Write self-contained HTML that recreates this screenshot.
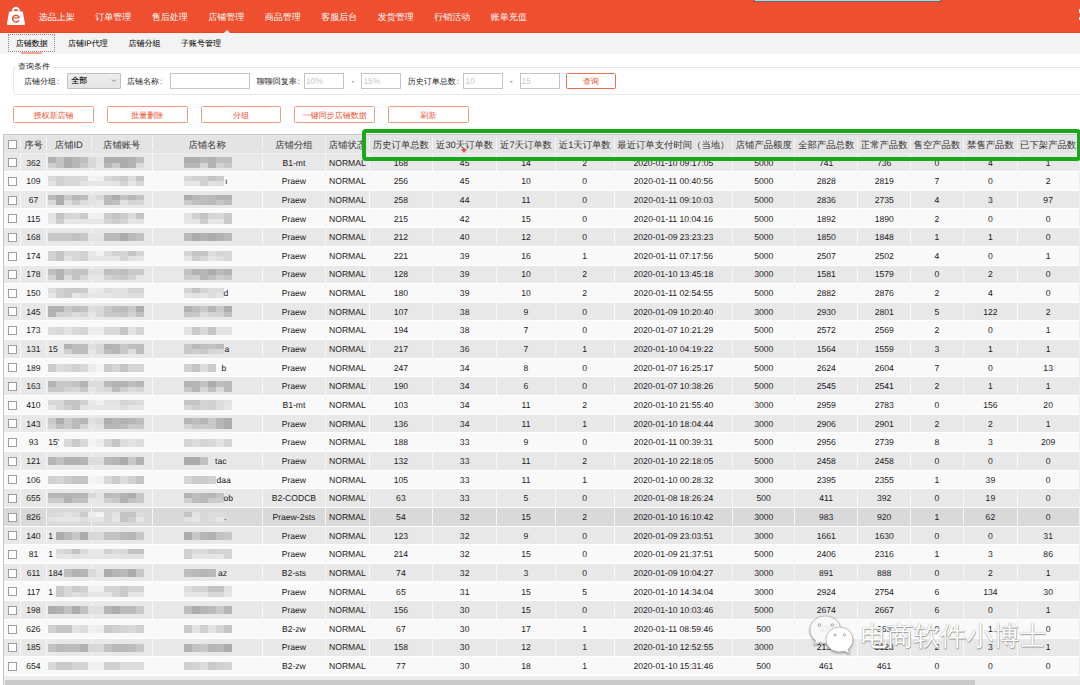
<!DOCTYPE html><html><head><meta charset="utf-8"><style>
*{margin:0;padding:0;box-sizing:border-box}
html,body{width:1080px;height:685px;overflow:hidden;background:#fff;text-rendering:geometricPrecision;font-family:"Liberation Sans",sans-serif;color:#333;position:relative}
.a{position:absolute;white-space:nowrap}
.nav{color:#fff;font-size:9px;top:11px;line-height:12px}
.tab{font-size:8px;top:39px;line-height:10px;color:#000;-webkit-text-stroke:0.05px #000}
.lbl{font-size:8px;line-height:10px;top:76.5px;color:#1a1a1a}
.inp{border:1px solid #c4c4c4;background:#fff;height:16px;top:73px;font-size:8.5px;color:#c8c8c8;line-height:15px;padding-left:1px}
.btn{border:1px solid #f19a86;border-radius:1.5px;height:16.7px;top:106.1px;width:80.5px;text-align:center;color:#eb4f2f;font-size:8px;line-height:17px}
.hd{font-size:9.35px;line-height:12px;color:#333;text-align:center;overflow:hidden}
.td{font-size:8.6px;line-height:12px;color:#222;text-align:center}
.cb{width:9px;height:9px;border:1px solid #9c9c9c;background:#fff}
</style></head><body>

<div class="a" style="left:0;top:0;width:1080px;height:33px;background:#EE4F2E;box-shadow:inset 0 -1px #ec4421"></div>
<div class="a" style="left:754.3px;top:0;width:186.7px;height:1.8px;background:#c9cdd1;border:0.6px solid #5d6a75;border-top:none"></div>
<div class="a" style="left:1078.8px;top:8.9px;width:2px;height:4.4px;background:#fff"></div><div class="a" style="left:1078.5px;top:17px;width:2px;height:3px;background:#fff"></div>
<svg class="a" style="left:0;top:0" width="40" height="33" viewBox="0 0 40 33">
<path d="M11.9 11.4 C11.9 8.3 13.6 6.8 15.9 6.8 C18.2 6.8 19.9 8.3 19.9 11.4 L22 11.4 Q22.7 11.5 22.9 12.3 L25 23.6 Q25.2 25 24 25 L8 25 Q6.8 25 7 23.6 L9 12.3 Q9.2 11.5 9.9 11.4 Z M14 10.9 L17.9 10.9 C17.9 9.5 17.1 8.9 15.9 8.9 C14.8 8.9 14 9.5 14 10.9 Z" fill="#fff" fill-rule="evenodd"/>
<path d="M18.9 20.3 A3.4 3.4 0 1 1 19.3 18" fill="none" stroke="#EE4F2E" stroke-width="1.4"/>
<path d="M12.8 17.9 L19.3 17.9" stroke="#EE4F2E" stroke-width="1.1"/>
</svg>
<div class="a nav" style="left:38.8px">选品上架</div>
<div class="a nav" style="left:95.3px">订单管理</div>
<div class="a nav" style="left:151.8px">售后处理</div>
<div class="a nav" style="left:208.3px">店铺管理</div>
<div class="a nav" style="left:264.8px">商品管理</div>
<div class="a nav" style="left:321.3px">客服后台</div>
<div class="a nav" style="left:377.8px">发货管理</div>
<div class="a nav" style="left:434.3px">行销活动</div>
<div class="a nav" style="left:490.8px">账单充值</div>
<div class="a" style="left:223.6px;top:29.5px;width:0;height:0;border-left:3.8px solid transparent;border-right:3.8px solid transparent;border-bottom:3.6px solid #fafafa"></div>
<div class="a" style="left:0;top:33px;width:1080px;height:20.5px;background:#f3f3f3"></div>
<div class="a" style="left:8px;top:34.2px;width:47px;height:17.4px;border:1px dotted #8a8a8a"></div>
<div class="a" style="left:20.8px;top:52.4px;width:21.4px;height:1.2px;background:#f7a592"></div>
<div class="a tab" style="left:15.7px">店铺数据</div>
<div class="a tab" style="left:68.1px">店铺IP代理</div>
<div class="a tab" style="left:128.4px">店铺分组</div>
<div class="a tab" style="left:181px">子账号管理</div>
<div class="a" style="left:13px;top:66.5px;width:1100px;height:28.2px;border:1px solid #e3e9ef;border-radius:3px"></div>
<div class="a" style="left:16px;top:61px;width:37px;height:10px;background:#fff"></div>
<div class="a tab" style="left:18px;top:61.5px;color:#222;-webkit-text-stroke:0">查询条件</div>
<div class="a lbl" style="left:24px">店铺分组<span style="margin-left:1px">:</span></div>
<div class="a" style="left:67px;top:73.3px;width:53.5px;height:15.5px;background:linear-gradient(#eeeeee,#e4e4e4);border:1px solid #c0c0c0;border-radius:1px"></div>
<div class="a" style="left:71.3px;top:76px;font-size:8px;line-height:10px;color:#000;-webkit-text-stroke:0.1px #000">全部</div>
<svg class="a" style="left:111px;top:79px" width="6" height="4"><path d="M1 0.6 L3 2.6 L5 0.6" stroke="#666" stroke-width="0.8" fill="none"/></svg>
<div class="a lbl" style="left:127px">店铺名称<span style="margin-left:1px">:</span></div>
<div class="a inp" style="left:170.1px;width:79.7px"></div>
<div class="a lbl" style="left:256.8px">聊聊回复率<span style="margin-left:1px">:</span></div>
<div class="a inp" style="left:304px;width:39.7px">10%</div>
<div class="a lbl" style="left:351.5px">-</div>
<div class="a inp" style="left:361.2px;width:39.5px">15%</div>
<div class="a lbl" style="left:407.8px">历史订单总数<span style="margin-left:1px">:</span></div>
<div class="a inp" style="left:463.3px;width:39.4px">10</div>
<div class="a lbl" style="left:510px">-</div>
<div class="a inp" style="left:519.6px;width:40px">15</div>
<div class="a btn" style="left:566.2px;top:73.3px;width:49.4px;height:16px;line-height:16.5px;color:#e8472a;border-color:#ef6c50">查询</div>
<div class="a btn" style="left:13.30px">授权新店铺</div>
<div class="a btn" style="left:107.02px">批量删除</div>
<div class="a btn" style="left:200.74px">分组</div>
<div class="a btn" style="left:294.46px">一键同步店铺数据</div>
<div class="a btn" style="left:388.18px">刷新</div>
<div class="a" style="left:3.3px;top:134.3px;width:1080px;height:550.7px;background:#eeeeee;border-left:1px solid #c5c8cc;border-top:1px solid #c8c8c8"></div>
<div class="a" style="left:4px;top:135.0px;width:1075px;height:18.3px;background:#e4e4e4"></div>
<div class="a" style="left:20.2px;top:137.3px;width:1px;height:13.0px;background:#f4f4f4"></div>
<div class="a" style="left:45.8px;top:137.3px;width:1px;height:13.0px;background:#f4f4f4"></div>
<div class="a" style="left:90.8px;top:137.3px;width:1px;height:13.0px;background:#f4f4f4"></div>
<div class="a" style="left:151.7px;top:137.3px;width:1px;height:13.0px;background:#f4f4f4"></div>
<div class="a" style="left:261.5px;top:137.3px;width:1px;height:13.0px;background:#f4f4f4"></div>
<div class="a" style="left:325.3px;top:137.3px;width:1px;height:13.0px;background:#f4f4f4"></div>
<div class="a" style="left:368.5px;top:137.3px;width:1px;height:13.0px;background:#f4f4f4"></div>
<div class="a" style="left:432.3px;top:137.3px;width:1px;height:13.0px;background:#f4f4f4"></div>
<div class="a" style="left:496.0px;top:137.3px;width:1px;height:13.0px;background:#f4f4f4"></div>
<div class="a" style="left:555.0px;top:137.3px;width:1px;height:13.0px;background:#f4f4f4"></div>
<div class="a" style="left:613.5px;top:137.3px;width:1px;height:13.0px;background:#f4f4f4"></div>
<div class="a" style="left:732.3px;top:137.3px;width:1px;height:13.0px;background:#f4f4f4"></div>
<div class="a" style="left:794.1px;top:137.3px;width:1px;height:13.0px;background:#f4f4f4"></div>
<div class="a" style="left:857.3px;top:137.3px;width:1px;height:13.0px;background:#f4f4f4"></div>
<div class="a" style="left:910.1px;top:137.3px;width:1px;height:13.0px;background:#f4f4f4"></div>
<div class="a" style="left:962.8px;top:137.3px;width:1px;height:13.0px;background:#f4f4f4"></div>
<div class="a" style="left:1017.0px;top:137.3px;width:1px;height:13.0px;background:#f4f4f4"></div>
<div class="a cb" style="left:8.2px;top:140px"></div>
<div class="a hd" style="left:20.7px;top:138.8px;width:25.6px">序号</div>
<div class="a hd" style="left:46.3px;top:138.8px;width:45.0px">店铺ID</div>
<div class="a hd" style="left:91.3px;top:138.8px;width:60.9px">店铺账号</div>
<div class="a hd" style="left:152.2px;top:138.8px;width:109.8px">店铺名称</div>
<div class="a hd" style="left:262.0px;top:138.8px;width:63.8px">店铺分组</div>
<div class="a hd" style="left:325.8px;top:138.8px;width:43.2px">店铺状态</div>
<div class="a hd" style="left:369.0px;top:138.8px;width:63.8px">历史订单总数</div>
<div class="a hd" style="left:432.8px;top:138.8px;width:63.7px">近30天订单数</div>
<div class="a hd" style="left:496.5px;top:138.8px;width:59.0px">近7天订单数</div>
<div class="a hd" style="left:555.5px;top:138.8px;width:58.5px">近1天订单数</div>
<div class="a hd" style="left:614.0px;top:138.8px;width:118.8px">最近订单支付时间（当地）</div>
<div class="a hd" style="left:732.8px;top:138.8px;width:61.8px">店铺产品额度</div>
<div class="a hd" style="left:794.6px;top:138.8px;width:63.2px">全部产品总数</div>
<div class="a hd" style="left:857.8px;top:138.8px;width:52.8px">正常产品数</div>
<div class="a hd" style="left:910.6px;top:138.8px;width:52.7px">售空产品数</div>
<div class="a hd" style="left:963.3px;top:138.8px;width:54.2px">禁售产品数</div>
<div class="a hd" style="left:1017.5px;top:138.8px;width:61.3px">已下架产品数</div>
<div class="a" style="left:461px;top:148.6px;width:0;height:0;border-left:3px solid transparent;border-right:3px solid transparent;border-top:4px solid #ee4f2e"></div>
<div class="a" style="left:4px;top:153.70px;width:1074.8px;height:17.45px;background:#e8e8e8;"></div>
<div class="a" style="left:20.2px;top:153.30px;width:1px;height:18.65px;background:#f6f6f6"></div>
<div class="a" style="left:45.8px;top:153.30px;width:1px;height:18.65px;background:#f6f6f6"></div>
<div class="a" style="left:90.8px;top:153.30px;width:1px;height:18.65px;background:#f6f6f6"></div>
<div class="a" style="left:151.7px;top:153.30px;width:1px;height:18.65px;background:#f6f6f6"></div>
<div class="a" style="left:261.5px;top:153.30px;width:1px;height:18.65px;background:#f6f6f6"></div>
<div class="a" style="left:325.3px;top:153.30px;width:1px;height:18.65px;background:#f6f6f6"></div>
<div class="a" style="left:368.5px;top:153.30px;width:1px;height:18.65px;background:#f6f6f6"></div>
<div class="a" style="left:432.3px;top:153.30px;width:1px;height:18.65px;background:#f6f6f6"></div>
<div class="a" style="left:496.0px;top:153.30px;width:1px;height:18.65px;background:#f6f6f6"></div>
<div class="a" style="left:555.0px;top:153.30px;width:1px;height:18.65px;background:#f6f6f6"></div>
<div class="a" style="left:613.5px;top:153.30px;width:1px;height:18.65px;background:#f6f6f6"></div>
<div class="a" style="left:732.3px;top:153.30px;width:1px;height:18.65px;background:#f6f6f6"></div>
<div class="a" style="left:794.1px;top:153.30px;width:1px;height:18.65px;background:#f6f6f6"></div>
<div class="a" style="left:857.3px;top:153.30px;width:1px;height:18.65px;background:#f6f6f6"></div>
<div class="a" style="left:910.1px;top:153.30px;width:1px;height:18.65px;background:#f6f6f6"></div>
<div class="a" style="left:962.8px;top:153.30px;width:1px;height:18.65px;background:#f6f6f6"></div>
<div class="a" style="left:1017.0px;top:153.30px;width:1px;height:18.65px;background:#f6f6f6"></div>
<div class="a cb" style="left:8.2px;top:158.30px"></div>
<div class="a td" style="left:20.7px;top:156.60px;width:25.6px">362</div>
<div class="a td" style="left:262.0px;top:156.60px;width:63.8px">B1-mt</div>
<div class="a td" style="left:325.8px;top:156.60px;width:43.2px">NORMAL</div>
<div class="a td" style="left:369.0px;top:156.60px;width:63.8px">168</div>
<div class="a td" style="left:432.8px;top:156.60px;width:63.7px">45</div>
<div class="a td" style="left:496.5px;top:156.60px;width:59.0px">14</div>
<div class="a td" style="left:555.5px;top:156.60px;width:58.5px">2</div>
<div class="a td" style="left:614.0px;top:156.60px;width:118.8px">2020-01-10 09:17:05</div>
<div class="a td" style="left:732.8px;top:156.60px;width:61.8px">5000</div>
<div class="a td" style="left:794.6px;top:156.60px;width:63.2px">741</div>
<div class="a td" style="left:857.8px;top:156.60px;width:52.8px">736</div>
<div class="a td" style="left:910.6px;top:156.60px;width:52.7px">0</div>
<div class="a td" style="left:963.3px;top:156.60px;width:54.2px">4</div>
<div class="a td" style="left:1017.5px;top:156.60px;width:61.3px">1</div>
<div class="a" style="left:47.9px;top:157.30px;width:8px;height:5.5px;background:#b2b2b2"></div>
<div class="a" style="left:47.9px;top:162.80px;width:8px;height:5px;background:#d0d0d0"></div>
<div class="a" style="left:55.9px;top:157.30px;width:8px;height:5.5px;background:#c2c2c2"></div>
<div class="a" style="left:55.9px;top:162.80px;width:8px;height:5px;background:#c2c2c2"></div>
<div class="a" style="left:63.9px;top:157.30px;width:8px;height:5.5px;background:#acacac"></div>
<div class="a" style="left:63.9px;top:162.80px;width:8px;height:5px;background:#acacac"></div>
<div class="a" style="left:71.9px;top:157.30px;width:8px;height:5.5px;background:#b6b6b6"></div>
<div class="a" style="left:71.9px;top:162.80px;width:8px;height:5px;background:#b6b6b6"></div>
<div class="a" style="left:79.9px;top:157.30px;width:8px;height:5.5px;background:#bebebe"></div>
<div class="a" style="left:79.9px;top:162.80px;width:8px;height:5px;background:#c8c8c8"></div>
<div class="a" style="left:87.9px;top:157.30px;width:8px;height:5.5px;background:#d8d8d8"></div>
<div class="a" style="left:87.9px;top:162.80px;width:8px;height:5px;background:#d8d8d8"></div>
<div class="a" style="left:95.9px;top:157.30px;width:8px;height:5.5px;background:#e4e4e4"></div>
<div class="a" style="left:95.9px;top:162.80px;width:8px;height:5px;background:#e6e6e6"></div>
<div class="a" style="left:103.9px;top:157.30px;width:8px;height:5.5px;background:#acacac"></div>
<div class="a" style="left:103.9px;top:162.80px;width:8px;height:5px;background:#b6b6b6"></div>
<div class="a" style="left:111.9px;top:157.30px;width:8px;height:5.5px;background:#acacac"></div>
<div class="a" style="left:111.9px;top:162.80px;width:8px;height:5px;background:#cacaca"></div>
<div class="a" style="left:119.9px;top:157.30px;width:8px;height:5.5px;background:#acacac"></div>
<div class="a" style="left:119.9px;top:162.80px;width:8px;height:5px;background:#acacac"></div>
<div class="a" style="left:127.9px;top:157.30px;width:8px;height:5.5px;background:#b2b2b2"></div>
<div class="a" style="left:127.9px;top:162.80px;width:8px;height:5px;background:#b2b2b2"></div>
<div class="a" style="left:135.9px;top:157.30px;width:8px;height:5.5px;background:#bebebe"></div>
<div class="a" style="left:135.9px;top:162.80px;width:8px;height:5px;background:#dcdcdc"></div>
<div class="a" style="left:183.7px;top:157.30px;width:8px;height:5.5px;background:#acacac"></div>
<div class="a" style="left:183.7px;top:162.80px;width:8px;height:5px;background:#b6b6b6"></div>
<div class="a" style="left:191.7px;top:157.30px;width:8px;height:5.5px;background:#acacac"></div>
<div class="a" style="left:191.7px;top:162.80px;width:8px;height:5px;background:#b6b6b6"></div>
<div class="a" style="left:199.7px;top:157.30px;width:8px;height:5.5px;background:#b6b6b6"></div>
<div class="a" style="left:199.7px;top:162.80px;width:8px;height:5px;background:#d4d4d4"></div>
<div class="a" style="left:207.7px;top:157.30px;width:8px;height:5.5px;background:#b2b2b2"></div>
<div class="a" style="left:207.7px;top:162.80px;width:8px;height:5px;background:#b2b2b2"></div>
<div class="a" style="left:215.7px;top:157.30px;width:8px;height:5.5px;background:#bebebe"></div>
<div class="a" style="left:215.7px;top:162.80px;width:8px;height:5px;background:#d2d2d2"></div>
<div class="a" style="left:223.7px;top:157.30px;width:8px;height:5.5px;background:#bebebe"></div>
<div class="a" style="left:223.7px;top:162.80px;width:8px;height:5px;background:#c8c8c8"></div>
<div class="a" style="left:4px;top:171.15px;width:1074.8px;height:19.85px;background:#faf9f9;box-shadow:inset 0 1px #fff,inset 0 -1px #fff"></div>
<div class="a" style="left:20.2px;top:171.95px;width:1px;height:18.65px;background:#f6f6f6"></div>
<div class="a" style="left:45.8px;top:171.95px;width:1px;height:18.65px;background:#f6f6f6"></div>
<div class="a" style="left:90.8px;top:171.95px;width:1px;height:18.65px;background:#f6f6f6"></div>
<div class="a" style="left:151.7px;top:171.95px;width:1px;height:18.65px;background:#f6f6f6"></div>
<div class="a" style="left:261.5px;top:171.95px;width:1px;height:18.65px;background:#f6f6f6"></div>
<div class="a" style="left:325.3px;top:171.95px;width:1px;height:18.65px;background:#f6f6f6"></div>
<div class="a" style="left:368.5px;top:171.95px;width:1px;height:18.65px;background:#f6f6f6"></div>
<div class="a" style="left:432.3px;top:171.95px;width:1px;height:18.65px;background:#f6f6f6"></div>
<div class="a" style="left:496.0px;top:171.95px;width:1px;height:18.65px;background:#f6f6f6"></div>
<div class="a" style="left:555.0px;top:171.95px;width:1px;height:18.65px;background:#f6f6f6"></div>
<div class="a" style="left:613.5px;top:171.95px;width:1px;height:18.65px;background:#f6f6f6"></div>
<div class="a" style="left:732.3px;top:171.95px;width:1px;height:18.65px;background:#f6f6f6"></div>
<div class="a" style="left:794.1px;top:171.95px;width:1px;height:18.65px;background:#f6f6f6"></div>
<div class="a" style="left:857.3px;top:171.95px;width:1px;height:18.65px;background:#f6f6f6"></div>
<div class="a" style="left:910.1px;top:171.95px;width:1px;height:18.65px;background:#f6f6f6"></div>
<div class="a" style="left:962.8px;top:171.95px;width:1px;height:18.65px;background:#f6f6f6"></div>
<div class="a" style="left:1017.0px;top:171.95px;width:1px;height:18.65px;background:#f6f6f6"></div>
<div class="a cb" style="left:8.2px;top:176.95px"></div>
<div class="a td" style="left:20.7px;top:175.25px;width:25.6px">109</div>
<div class="a td" style="left:262.0px;top:175.25px;width:63.8px">Praew</div>
<div class="a td" style="left:325.8px;top:175.25px;width:43.2px">NORMAL</div>
<div class="a td" style="left:369.0px;top:175.25px;width:63.8px">256</div>
<div class="a td" style="left:432.8px;top:175.25px;width:63.7px">45</div>
<div class="a td" style="left:496.5px;top:175.25px;width:59.0px">10</div>
<div class="a td" style="left:555.5px;top:175.25px;width:58.5px">0</div>
<div class="a td" style="left:614.0px;top:175.25px;width:118.8px">2020-01-11 00:40:56</div>
<div class="a td" style="left:732.8px;top:175.25px;width:61.8px">5000</div>
<div class="a td" style="left:794.6px;top:175.25px;width:63.2px">2828</div>
<div class="a td" style="left:857.8px;top:175.25px;width:52.8px">2819</div>
<div class="a td" style="left:910.6px;top:175.25px;width:52.7px">7</div>
<div class="a td" style="left:963.3px;top:175.25px;width:54.2px">0</div>
<div class="a td" style="left:1017.5px;top:175.25px;width:61.3px">2</div>
<div class="a" style="left:47.9px;top:175.95px;width:8px;height:5.5px;background:#d8d8d8"></div>
<div class="a" style="left:47.9px;top:181.45px;width:8px;height:5px;background:#e2e2e2"></div>
<div class="a" style="left:55.9px;top:175.95px;width:8px;height:5.5px;background:#d0d0d0"></div>
<div class="a" style="left:55.9px;top:181.45px;width:8px;height:5px;background:#d0d0d0"></div>
<div class="a" style="left:63.9px;top:175.95px;width:8px;height:5.5px;background:#d8d8d8"></div>
<div class="a" style="left:63.9px;top:181.45px;width:8px;height:5px;background:#d8d8d8"></div>
<div class="a" style="left:71.9px;top:175.95px;width:8px;height:5.5px;background:#d8d8d8"></div>
<div class="a" style="left:71.9px;top:181.45px;width:8px;height:5px;background:#d8d8d8"></div>
<div class="a" style="left:79.9px;top:175.95px;width:8px;height:5.5px;background:#d8d8d8"></div>
<div class="a" style="left:79.9px;top:181.45px;width:8px;height:5px;background:#e2e2e2"></div>
<div class="a" style="left:87.9px;top:175.95px;width:8px;height:5.5px;background:#f4f4f4"></div>
<div class="a" style="left:87.9px;top:181.45px;width:8px;height:5px;background:#e6e6e6"></div>
<div class="a" style="left:95.9px;top:175.95px;width:8px;height:5.5px;background:#f0f0f0"></div>
<div class="a" style="left:95.9px;top:181.45px;width:8px;height:5px;background:#e6e6e6"></div>
<div class="a" style="left:103.9px;top:175.95px;width:8px;height:5.5px;background:#d8d8d8"></div>
<div class="a" style="left:103.9px;top:181.45px;width:8px;height:5px;background:#e6e6e6"></div>
<div class="a" style="left:111.9px;top:175.95px;width:8px;height:5.5px;background:#d0d0d0"></div>
<div class="a" style="left:111.9px;top:181.45px;width:8px;height:5px;background:#e4e4e4"></div>
<div class="a" style="left:119.9px;top:175.95px;width:8px;height:5.5px;background:#cacaca"></div>
<div class="a" style="left:119.9px;top:181.45px;width:8px;height:5px;background:#d4d4d4"></div>
<div class="a" style="left:127.9px;top:175.95px;width:8px;height:5.5px;background:#dcdcdc"></div>
<div class="a" style="left:127.9px;top:181.45px;width:8px;height:5px;background:#e6e6e6"></div>
<div class="a" style="left:135.9px;top:175.95px;width:8px;height:5.5px;background:#c4c4c4"></div>
<div class="a" style="left:135.9px;top:181.45px;width:8px;height:5px;background:#d8d8d8"></div>
<div class="a" style="left:183.7px;top:175.95px;width:8px;height:5.5px;background:#d8d8d8"></div>
<div class="a" style="left:183.7px;top:181.45px;width:8px;height:5px;background:#e6e6e6"></div>
<div class="a" style="left:191.7px;top:175.95px;width:8px;height:5.5px;background:#d0d0d0"></div>
<div class="a" style="left:191.7px;top:181.45px;width:8px;height:5px;background:#e6e6e6"></div>
<div class="a" style="left:199.7px;top:175.95px;width:8px;height:5.5px;background:#d0d0d0"></div>
<div class="a" style="left:199.7px;top:181.45px;width:8px;height:5px;background:#d0d0d0"></div>
<div class="a" style="left:207.7px;top:175.95px;width:8px;height:5.5px;background:#c4c4c4"></div>
<div class="a" style="left:207.7px;top:181.45px;width:8px;height:5px;background:#e2e2e2"></div>
<div class="a" style="left:215.7px;top:175.95px;width:8px;height:5.5px;background:#cacaca"></div>
<div class="a" style="left:215.7px;top:181.45px;width:8px;height:5px;background:#dedede"></div>
<div class="a" style="left:4px;top:191.00px;width:1074.8px;height:17.45px;background:#e8e8e8;"></div>
<div class="a" style="left:20.2px;top:190.60px;width:1px;height:18.65px;background:#f6f6f6"></div>
<div class="a" style="left:45.8px;top:190.60px;width:1px;height:18.65px;background:#f6f6f6"></div>
<div class="a" style="left:90.8px;top:190.60px;width:1px;height:18.65px;background:#f6f6f6"></div>
<div class="a" style="left:151.7px;top:190.60px;width:1px;height:18.65px;background:#f6f6f6"></div>
<div class="a" style="left:261.5px;top:190.60px;width:1px;height:18.65px;background:#f6f6f6"></div>
<div class="a" style="left:325.3px;top:190.60px;width:1px;height:18.65px;background:#f6f6f6"></div>
<div class="a" style="left:368.5px;top:190.60px;width:1px;height:18.65px;background:#f6f6f6"></div>
<div class="a" style="left:432.3px;top:190.60px;width:1px;height:18.65px;background:#f6f6f6"></div>
<div class="a" style="left:496.0px;top:190.60px;width:1px;height:18.65px;background:#f6f6f6"></div>
<div class="a" style="left:555.0px;top:190.60px;width:1px;height:18.65px;background:#f6f6f6"></div>
<div class="a" style="left:613.5px;top:190.60px;width:1px;height:18.65px;background:#f6f6f6"></div>
<div class="a" style="left:732.3px;top:190.60px;width:1px;height:18.65px;background:#f6f6f6"></div>
<div class="a" style="left:794.1px;top:190.60px;width:1px;height:18.65px;background:#f6f6f6"></div>
<div class="a" style="left:857.3px;top:190.60px;width:1px;height:18.65px;background:#f6f6f6"></div>
<div class="a" style="left:910.1px;top:190.60px;width:1px;height:18.65px;background:#f6f6f6"></div>
<div class="a" style="left:962.8px;top:190.60px;width:1px;height:18.65px;background:#f6f6f6"></div>
<div class="a" style="left:1017.0px;top:190.60px;width:1px;height:18.65px;background:#f6f6f6"></div>
<div class="a cb" style="left:8.2px;top:195.60px"></div>
<div class="a td" style="left:20.7px;top:193.90px;width:25.6px">67</div>
<div class="a td" style="left:262.0px;top:193.90px;width:63.8px">Praew</div>
<div class="a td" style="left:325.8px;top:193.90px;width:43.2px">NORMAL</div>
<div class="a td" style="left:369.0px;top:193.90px;width:63.8px">258</div>
<div class="a td" style="left:432.8px;top:193.90px;width:63.7px">44</div>
<div class="a td" style="left:496.5px;top:193.90px;width:59.0px">11</div>
<div class="a td" style="left:555.5px;top:193.90px;width:58.5px">0</div>
<div class="a td" style="left:614.0px;top:193.90px;width:118.8px">2020-01-11 09:10:03</div>
<div class="a td" style="left:732.8px;top:193.90px;width:61.8px">5000</div>
<div class="a td" style="left:794.6px;top:193.90px;width:63.2px">2836</div>
<div class="a td" style="left:857.8px;top:193.90px;width:52.8px">2735</div>
<div class="a td" style="left:910.6px;top:193.90px;width:52.7px">4</div>
<div class="a td" style="left:963.3px;top:193.90px;width:54.2px">3</div>
<div class="a td" style="left:1017.5px;top:193.90px;width:61.3px">97</div>
<div class="a" style="left:47.9px;top:194.60px;width:8px;height:5.5px;background:#bababa"></div>
<div class="a" style="left:47.9px;top:200.10px;width:8px;height:5px;background:#d8d8d8"></div>
<div class="a" style="left:55.9px;top:194.60px;width:8px;height:5.5px;background:#acacac"></div>
<div class="a" style="left:55.9px;top:200.10px;width:8px;height:5px;background:#acacac"></div>
<div class="a" style="left:63.9px;top:194.60px;width:8px;height:5.5px;background:#c8c8c8"></div>
<div class="a" style="left:63.9px;top:200.10px;width:8px;height:5px;background:#dcdcdc"></div>
<div class="a" style="left:71.9px;top:194.60px;width:8px;height:5.5px;background:#b6b6b6"></div>
<div class="a" style="left:71.9px;top:200.10px;width:8px;height:5px;background:#cacaca"></div>
<div class="a" style="left:79.9px;top:194.60px;width:8px;height:5.5px;background:#bebebe"></div>
<div class="a" style="left:79.9px;top:200.10px;width:8px;height:5px;background:#dcdcdc"></div>
<div class="a" style="left:87.9px;top:194.60px;width:8px;height:5.5px;background:#e4e4e4"></div>
<div class="a" style="left:87.9px;top:200.10px;width:8px;height:5px;background:#e4e4e4"></div>
<div class="a" style="left:95.9px;top:194.60px;width:8px;height:5.5px;background:#d8d8d8"></div>
<div class="a" style="left:95.9px;top:200.10px;width:8px;height:5px;background:#e6e6e6"></div>
<div class="a" style="left:103.9px;top:194.60px;width:8px;height:5.5px;background:#bababa"></div>
<div class="a" style="left:103.9px;top:200.10px;width:8px;height:5px;background:#bababa"></div>
<div class="a" style="left:111.9px;top:194.60px;width:8px;height:5.5px;background:#acacac"></div>
<div class="a" style="left:111.9px;top:200.10px;width:8px;height:5px;background:#c0c0c0"></div>
<div class="a" style="left:119.9px;top:194.60px;width:8px;height:5.5px;background:#c2c2c2"></div>
<div class="a" style="left:119.9px;top:200.10px;width:8px;height:5px;background:#e0e0e0"></div>
<div class="a" style="left:127.9px;top:194.60px;width:8px;height:5.5px;background:#b6b6b6"></div>
<div class="a" style="left:127.9px;top:200.10px;width:8px;height:5px;background:#d4d4d4"></div>
<div class="a" style="left:135.9px;top:194.60px;width:8px;height:5.5px;background:#c2c2c2"></div>
<div class="a" style="left:135.9px;top:200.10px;width:8px;height:5px;background:#d6d6d6"></div>
<div class="a" style="left:183.7px;top:194.60px;width:8px;height:5.5px;background:#acacac"></div>
<div class="a" style="left:183.7px;top:200.10px;width:8px;height:5px;background:#cacaca"></div>
<div class="a" style="left:191.7px;top:194.60px;width:8px;height:5.5px;background:#b6b6b6"></div>
<div class="a" style="left:191.7px;top:200.10px;width:8px;height:5px;background:#c0c0c0"></div>
<div class="a" style="left:199.7px;top:194.60px;width:8px;height:5.5px;background:#bebebe"></div>
<div class="a" style="left:199.7px;top:200.10px;width:8px;height:5px;background:#bebebe"></div>
<div class="a" style="left:207.7px;top:194.60px;width:8px;height:5.5px;background:#bababa"></div>
<div class="a" style="left:207.7px;top:200.10px;width:8px;height:5px;background:#bababa"></div>
<div class="a" style="left:215.7px;top:194.60px;width:8px;height:5.5px;background:#b2b2b2"></div>
<div class="a" style="left:215.7px;top:200.10px;width:8px;height:5px;background:#c6c6c6"></div>
<div class="a" style="left:223.7px;top:194.60px;width:8px;height:5.5px;background:#b2b2b2"></div>
<div class="a" style="left:223.7px;top:200.10px;width:8px;height:5px;background:#bcbcbc"></div>
<div class="a" style="left:4px;top:208.44px;width:1074.8px;height:19.85px;background:#faf9f9;box-shadow:inset 0 1px #fff,inset 0 -1px #fff"></div>
<div class="a" style="left:20.2px;top:209.24px;width:1px;height:18.65px;background:#f6f6f6"></div>
<div class="a" style="left:45.8px;top:209.24px;width:1px;height:18.65px;background:#f6f6f6"></div>
<div class="a" style="left:90.8px;top:209.24px;width:1px;height:18.65px;background:#f6f6f6"></div>
<div class="a" style="left:151.7px;top:209.24px;width:1px;height:18.65px;background:#f6f6f6"></div>
<div class="a" style="left:261.5px;top:209.24px;width:1px;height:18.65px;background:#f6f6f6"></div>
<div class="a" style="left:325.3px;top:209.24px;width:1px;height:18.65px;background:#f6f6f6"></div>
<div class="a" style="left:368.5px;top:209.24px;width:1px;height:18.65px;background:#f6f6f6"></div>
<div class="a" style="left:432.3px;top:209.24px;width:1px;height:18.65px;background:#f6f6f6"></div>
<div class="a" style="left:496.0px;top:209.24px;width:1px;height:18.65px;background:#f6f6f6"></div>
<div class="a" style="left:555.0px;top:209.24px;width:1px;height:18.65px;background:#f6f6f6"></div>
<div class="a" style="left:613.5px;top:209.24px;width:1px;height:18.65px;background:#f6f6f6"></div>
<div class="a" style="left:732.3px;top:209.24px;width:1px;height:18.65px;background:#f6f6f6"></div>
<div class="a" style="left:794.1px;top:209.24px;width:1px;height:18.65px;background:#f6f6f6"></div>
<div class="a" style="left:857.3px;top:209.24px;width:1px;height:18.65px;background:#f6f6f6"></div>
<div class="a" style="left:910.1px;top:209.24px;width:1px;height:18.65px;background:#f6f6f6"></div>
<div class="a" style="left:962.8px;top:209.24px;width:1px;height:18.65px;background:#f6f6f6"></div>
<div class="a" style="left:1017.0px;top:209.24px;width:1px;height:18.65px;background:#f6f6f6"></div>
<div class="a cb" style="left:8.2px;top:214.24px"></div>
<div class="a td" style="left:20.7px;top:212.54px;width:25.6px">115</div>
<div class="a td" style="left:262.0px;top:212.54px;width:63.8px">Praew</div>
<div class="a td" style="left:325.8px;top:212.54px;width:43.2px">NORMAL</div>
<div class="a td" style="left:369.0px;top:212.54px;width:63.8px">215</div>
<div class="a td" style="left:432.8px;top:212.54px;width:63.7px">42</div>
<div class="a td" style="left:496.5px;top:212.54px;width:59.0px">15</div>
<div class="a td" style="left:555.5px;top:212.54px;width:58.5px">0</div>
<div class="a td" style="left:614.0px;top:212.54px;width:118.8px">2020-01-11 10:04:16</div>
<div class="a td" style="left:732.8px;top:212.54px;width:61.8px">5000</div>
<div class="a td" style="left:794.6px;top:212.54px;width:63.2px">1892</div>
<div class="a td" style="left:857.8px;top:212.54px;width:52.8px">1890</div>
<div class="a td" style="left:910.6px;top:212.54px;width:52.7px">2</div>
<div class="a td" style="left:963.3px;top:212.54px;width:54.2px">0</div>
<div class="a td" style="left:1017.5px;top:212.54px;width:61.3px">0</div>
<div class="a" style="left:47.9px;top:213.24px;width:8px;height:5.5px;background:#e2e2e2"></div>
<div class="a" style="left:47.9px;top:218.74px;width:8px;height:5px;background:#e6e6e6"></div>
<div class="a" style="left:55.9px;top:213.24px;width:8px;height:5.5px;background:#c4c4c4"></div>
<div class="a" style="left:55.9px;top:218.74px;width:8px;height:5px;background:#cecece"></div>
<div class="a" style="left:63.9px;top:213.24px;width:8px;height:5.5px;background:#d4d4d4"></div>
<div class="a" style="left:63.9px;top:218.74px;width:8px;height:5px;background:#e6e6e6"></div>
<div class="a" style="left:71.9px;top:213.24px;width:8px;height:5.5px;background:#d8d8d8"></div>
<div class="a" style="left:71.9px;top:218.74px;width:8px;height:5px;background:#e6e6e6"></div>
<div class="a" style="left:79.9px;top:213.24px;width:8px;height:5.5px;background:#cacaca"></div>
<div class="a" style="left:79.9px;top:218.74px;width:8px;height:5px;background:#e6e6e6"></div>
<div class="a" style="left:87.9px;top:213.24px;width:8px;height:5.5px;background:#f0f0f0"></div>
<div class="a" style="left:87.9px;top:218.74px;width:8px;height:5px;background:#e6e6e6"></div>
<div class="a" style="left:95.9px;top:213.24px;width:8px;height:5.5px;background:#f0f0f0"></div>
<div class="a" style="left:95.9px;top:218.74px;width:8px;height:5px;background:#e6e6e6"></div>
<div class="a" style="left:103.9px;top:213.24px;width:8px;height:5.5px;background:#cacaca"></div>
<div class="a" style="left:103.9px;top:218.74px;width:8px;height:5px;background:#d4d4d4"></div>
<div class="a" style="left:111.9px;top:213.24px;width:8px;height:5.5px;background:#c4c4c4"></div>
<div class="a" style="left:111.9px;top:218.74px;width:8px;height:5px;background:#cecece"></div>
<div class="a" style="left:119.9px;top:213.24px;width:8px;height:5.5px;background:#cacaca"></div>
<div class="a" style="left:119.9px;top:218.74px;width:8px;height:5px;background:#d4d4d4"></div>
<div class="a" style="left:127.9px;top:213.24px;width:8px;height:5.5px;background:#dcdcdc"></div>
<div class="a" style="left:127.9px;top:218.74px;width:8px;height:5px;background:#e6e6e6"></div>
<div class="a" style="left:135.9px;top:213.24px;width:8px;height:5.5px;background:#c4c4c4"></div>
<div class="a" style="left:135.9px;top:218.74px;width:8px;height:5px;background:#e2e2e2"></div>
<div class="a" style="left:183.7px;top:213.24px;width:8px;height:5.5px;background:#e2e2e2"></div>
<div class="a" style="left:183.7px;top:218.74px;width:8px;height:5px;background:#e6e6e6"></div>
<div class="a" style="left:191.7px;top:213.24px;width:8px;height:5.5px;background:#d0d0d0"></div>
<div class="a" style="left:191.7px;top:218.74px;width:8px;height:5px;background:#e4e4e4"></div>
<div class="a" style="left:199.7px;top:213.24px;width:8px;height:5.5px;background:#c4c4c4"></div>
<div class="a" style="left:199.7px;top:218.74px;width:8px;height:5px;background:#cecece"></div>
<div class="a" style="left:207.7px;top:213.24px;width:8px;height:5.5px;background:#d4d4d4"></div>
<div class="a" style="left:207.7px;top:218.74px;width:8px;height:5px;background:#e6e6e6"></div>
<div class="a" style="left:215.7px;top:213.24px;width:8px;height:5.5px;background:#d8d8d8"></div>
<div class="a" style="left:215.7px;top:218.74px;width:8px;height:5px;background:#e6e6e6"></div>
<div class="a" style="left:223.7px;top:213.24px;width:8px;height:5.5px;background:#cacaca"></div>
<div class="a" style="left:223.7px;top:218.74px;width:8px;height:5px;background:#cacaca"></div>
<div class="a" style="left:4px;top:228.29px;width:1074.8px;height:17.45px;background:#e8e8e8;"></div>
<div class="a" style="left:20.2px;top:227.89px;width:1px;height:18.65px;background:#f6f6f6"></div>
<div class="a" style="left:45.8px;top:227.89px;width:1px;height:18.65px;background:#f6f6f6"></div>
<div class="a" style="left:90.8px;top:227.89px;width:1px;height:18.65px;background:#f6f6f6"></div>
<div class="a" style="left:151.7px;top:227.89px;width:1px;height:18.65px;background:#f6f6f6"></div>
<div class="a" style="left:261.5px;top:227.89px;width:1px;height:18.65px;background:#f6f6f6"></div>
<div class="a" style="left:325.3px;top:227.89px;width:1px;height:18.65px;background:#f6f6f6"></div>
<div class="a" style="left:368.5px;top:227.89px;width:1px;height:18.65px;background:#f6f6f6"></div>
<div class="a" style="left:432.3px;top:227.89px;width:1px;height:18.65px;background:#f6f6f6"></div>
<div class="a" style="left:496.0px;top:227.89px;width:1px;height:18.65px;background:#f6f6f6"></div>
<div class="a" style="left:555.0px;top:227.89px;width:1px;height:18.65px;background:#f6f6f6"></div>
<div class="a" style="left:613.5px;top:227.89px;width:1px;height:18.65px;background:#f6f6f6"></div>
<div class="a" style="left:732.3px;top:227.89px;width:1px;height:18.65px;background:#f6f6f6"></div>
<div class="a" style="left:794.1px;top:227.89px;width:1px;height:18.65px;background:#f6f6f6"></div>
<div class="a" style="left:857.3px;top:227.89px;width:1px;height:18.65px;background:#f6f6f6"></div>
<div class="a" style="left:910.1px;top:227.89px;width:1px;height:18.65px;background:#f6f6f6"></div>
<div class="a" style="left:962.8px;top:227.89px;width:1px;height:18.65px;background:#f6f6f6"></div>
<div class="a" style="left:1017.0px;top:227.89px;width:1px;height:18.65px;background:#f6f6f6"></div>
<div class="a cb" style="left:8.2px;top:232.89px"></div>
<div class="a td" style="left:20.7px;top:231.19px;width:25.6px">168</div>
<div class="a td" style="left:262.0px;top:231.19px;width:63.8px">Praew</div>
<div class="a td" style="left:325.8px;top:231.19px;width:43.2px">NORMAL</div>
<div class="a td" style="left:369.0px;top:231.19px;width:63.8px">212</div>
<div class="a td" style="left:432.8px;top:231.19px;width:63.7px">40</div>
<div class="a td" style="left:496.5px;top:231.19px;width:59.0px">12</div>
<div class="a td" style="left:555.5px;top:231.19px;width:58.5px">0</div>
<div class="a td" style="left:614.0px;top:231.19px;width:118.8px">2020-01-09 23:23:23</div>
<div class="a td" style="left:732.8px;top:231.19px;width:61.8px">5000</div>
<div class="a td" style="left:794.6px;top:231.19px;width:63.2px">1850</div>
<div class="a td" style="left:857.8px;top:231.19px;width:52.8px">1848</div>
<div class="a td" style="left:910.6px;top:231.19px;width:52.7px">1</div>
<div class="a td" style="left:963.3px;top:231.19px;width:54.2px">1</div>
<div class="a td" style="left:1017.5px;top:231.19px;width:61.3px">0</div>
<div class="a" style="left:47.9px;top:233.39px;width:8px;height:8px;background:#c8c8c8"></div>
<div class="a" style="left:55.9px;top:233.39px;width:8px;height:8px;background:#c8c8c8"></div>
<div class="a" style="left:63.9px;top:233.39px;width:8px;height:8px;background:#c8c8c8"></div>
<div class="a" style="left:71.9px;top:233.39px;width:8px;height:8px;background:#c2c2c2"></div>
<div class="a" style="left:79.9px;top:233.39px;width:8px;height:8px;background:#c8c8c8"></div>
<div class="a" style="left:87.9px;top:233.39px;width:8px;height:8px;background:#e4e4e4"></div>
<div class="a" style="left:95.9px;top:233.39px;width:8px;height:8px;background:#e4e4e4"></div>
<div class="a" style="left:103.9px;top:233.39px;width:8px;height:8px;background:#bababa"></div>
<div class="a" style="left:111.9px;top:233.39px;width:8px;height:8px;background:#bababa"></div>
<div class="a" style="left:119.9px;top:233.39px;width:8px;height:8px;background:#acacac"></div>
<div class="a" style="left:127.9px;top:233.39px;width:8px;height:8px;background:#bababa"></div>
<div class="a" style="left:135.9px;top:233.39px;width:8px;height:8px;background:#c2c2c2"></div>
<div class="a" style="left:183.7px;top:233.39px;width:8px;height:8px;background:#bababa"></div>
<div class="a" style="left:191.7px;top:233.39px;width:8px;height:8px;background:#acacac"></div>
<div class="a" style="left:199.7px;top:233.39px;width:8px;height:8px;background:#b2b2b2"></div>
<div class="a" style="left:207.7px;top:233.39px;width:8px;height:8px;background:#acacac"></div>
<div class="a" style="left:215.7px;top:233.39px;width:8px;height:8px;background:#b2b2b2"></div>
<div class="a" style="left:223.7px;top:233.39px;width:8px;height:8px;background:#bababa"></div>
<div class="a" style="left:4px;top:245.74px;width:1074.8px;height:19.85px;background:#faf9f9;box-shadow:inset 0 1px #fff,inset 0 -1px #fff"></div>
<div class="a" style="left:20.2px;top:246.54px;width:1px;height:18.65px;background:#f6f6f6"></div>
<div class="a" style="left:45.8px;top:246.54px;width:1px;height:18.65px;background:#f6f6f6"></div>
<div class="a" style="left:90.8px;top:246.54px;width:1px;height:18.65px;background:#f6f6f6"></div>
<div class="a" style="left:151.7px;top:246.54px;width:1px;height:18.65px;background:#f6f6f6"></div>
<div class="a" style="left:261.5px;top:246.54px;width:1px;height:18.65px;background:#f6f6f6"></div>
<div class="a" style="left:325.3px;top:246.54px;width:1px;height:18.65px;background:#f6f6f6"></div>
<div class="a" style="left:368.5px;top:246.54px;width:1px;height:18.65px;background:#f6f6f6"></div>
<div class="a" style="left:432.3px;top:246.54px;width:1px;height:18.65px;background:#f6f6f6"></div>
<div class="a" style="left:496.0px;top:246.54px;width:1px;height:18.65px;background:#f6f6f6"></div>
<div class="a" style="left:555.0px;top:246.54px;width:1px;height:18.65px;background:#f6f6f6"></div>
<div class="a" style="left:613.5px;top:246.54px;width:1px;height:18.65px;background:#f6f6f6"></div>
<div class="a" style="left:732.3px;top:246.54px;width:1px;height:18.65px;background:#f6f6f6"></div>
<div class="a" style="left:794.1px;top:246.54px;width:1px;height:18.65px;background:#f6f6f6"></div>
<div class="a" style="left:857.3px;top:246.54px;width:1px;height:18.65px;background:#f6f6f6"></div>
<div class="a" style="left:910.1px;top:246.54px;width:1px;height:18.65px;background:#f6f6f6"></div>
<div class="a" style="left:962.8px;top:246.54px;width:1px;height:18.65px;background:#f6f6f6"></div>
<div class="a" style="left:1017.0px;top:246.54px;width:1px;height:18.65px;background:#f6f6f6"></div>
<div class="a cb" style="left:8.2px;top:251.54px"></div>
<div class="a td" style="left:20.7px;top:249.84px;width:25.6px">174</div>
<div class="a td" style="left:262.0px;top:249.84px;width:63.8px">Praew</div>
<div class="a td" style="left:325.8px;top:249.84px;width:43.2px">NORMAL</div>
<div class="a td" style="left:369.0px;top:249.84px;width:63.8px">221</div>
<div class="a td" style="left:432.8px;top:249.84px;width:63.7px">39</div>
<div class="a td" style="left:496.5px;top:249.84px;width:59.0px">16</div>
<div class="a td" style="left:555.5px;top:249.84px;width:58.5px">1</div>
<div class="a td" style="left:614.0px;top:249.84px;width:118.8px">2020-01-11 07:17:56</div>
<div class="a td" style="left:732.8px;top:249.84px;width:61.8px">5000</div>
<div class="a td" style="left:794.6px;top:249.84px;width:63.2px">2507</div>
<div class="a td" style="left:857.8px;top:249.84px;width:52.8px">2502</div>
<div class="a td" style="left:910.6px;top:249.84px;width:52.7px">4</div>
<div class="a td" style="left:963.3px;top:249.84px;width:54.2px">0</div>
<div class="a td" style="left:1017.5px;top:249.84px;width:61.3px">1</div>
<div class="a" style="left:47.9px;top:250.54px;width:8px;height:5.5px;background:#d0d0d0"></div>
<div class="a" style="left:47.9px;top:256.04px;width:8px;height:5px;background:#d0d0d0"></div>
<div class="a" style="left:55.9px;top:250.54px;width:8px;height:5.5px;background:#c4c4c4"></div>
<div class="a" style="left:55.9px;top:256.04px;width:8px;height:5px;background:#c4c4c4"></div>
<div class="a" style="left:63.9px;top:250.54px;width:8px;height:5.5px;background:#d8d8d8"></div>
<div class="a" style="left:63.9px;top:256.04px;width:8px;height:5px;background:#e2e2e2"></div>
<div class="a" style="left:71.9px;top:250.54px;width:8px;height:5.5px;background:#d8d8d8"></div>
<div class="a" style="left:71.9px;top:256.04px;width:8px;height:5px;background:#d8d8d8"></div>
<div class="a" style="left:79.9px;top:250.54px;width:8px;height:5.5px;background:#d0d0d0"></div>
<div class="a" style="left:79.9px;top:256.04px;width:8px;height:5px;background:#d0d0d0"></div>
<div class="a" style="left:87.9px;top:250.54px;width:8px;height:5.5px;background:#e8e8e8"></div>
<div class="a" style="left:87.9px;top:256.04px;width:8px;height:5px;background:#e6e6e6"></div>
<div class="a" style="left:95.9px;top:250.54px;width:8px;height:5.5px;background:#f4f4f4"></div>
<div class="a" style="left:95.9px;top:256.04px;width:8px;height:5px;background:#e6e6e6"></div>
<div class="a" style="left:103.9px;top:250.54px;width:8px;height:5.5px;background:#dcdcdc"></div>
<div class="a" style="left:103.9px;top:256.04px;width:8px;height:5px;background:#e6e6e6"></div>
<div class="a" style="left:111.9px;top:250.54px;width:8px;height:5.5px;background:#d0d0d0"></div>
<div class="a" style="left:111.9px;top:256.04px;width:8px;height:5px;background:#e4e4e4"></div>
<div class="a" style="left:119.9px;top:250.54px;width:8px;height:5.5px;background:#d4d4d4"></div>
<div class="a" style="left:119.9px;top:256.04px;width:8px;height:5px;background:#d4d4d4"></div>
<div class="a" style="left:127.9px;top:250.54px;width:8px;height:5.5px;background:#c4c4c4"></div>
<div class="a" style="left:127.9px;top:256.04px;width:8px;height:5px;background:#e2e2e2"></div>
<div class="a" style="left:135.9px;top:250.54px;width:8px;height:5.5px;background:#d4d4d4"></div>
<div class="a" style="left:135.9px;top:256.04px;width:8px;height:5px;background:#e6e6e6"></div>
<div class="a" style="left:183.7px;top:250.54px;width:8px;height:5.5px;background:#d4d4d4"></div>
<div class="a" style="left:183.7px;top:256.04px;width:8px;height:5px;background:#e6e6e6"></div>
<div class="a" style="left:191.7px;top:250.54px;width:8px;height:5.5px;background:#c4c4c4"></div>
<div class="a" style="left:191.7px;top:256.04px;width:8px;height:5px;background:#cecece"></div>
<div class="a" style="left:199.7px;top:250.54px;width:8px;height:5.5px;background:#c4c4c4"></div>
<div class="a" style="left:199.7px;top:256.04px;width:8px;height:5px;background:#d8d8d8"></div>
<div class="a" style="left:207.7px;top:250.54px;width:8px;height:5.5px;background:#dcdcdc"></div>
<div class="a" style="left:207.7px;top:256.04px;width:8px;height:5px;background:#e6e6e6"></div>
<div class="a" style="left:215.7px;top:250.54px;width:8px;height:5.5px;background:#d4d4d4"></div>
<div class="a" style="left:215.7px;top:256.04px;width:8px;height:5px;background:#dedede"></div>
<div class="a" style="left:223.7px;top:250.54px;width:8px;height:5.5px;background:#d8d8d8"></div>
<div class="a" style="left:223.7px;top:256.04px;width:8px;height:5px;background:#d8d8d8"></div>
<div class="a" style="left:4px;top:265.59px;width:1074.8px;height:17.45px;background:#e8e8e8;"></div>
<div class="a" style="left:20.2px;top:265.19px;width:1px;height:18.65px;background:#f6f6f6"></div>
<div class="a" style="left:45.8px;top:265.19px;width:1px;height:18.65px;background:#f6f6f6"></div>
<div class="a" style="left:90.8px;top:265.19px;width:1px;height:18.65px;background:#f6f6f6"></div>
<div class="a" style="left:151.7px;top:265.19px;width:1px;height:18.65px;background:#f6f6f6"></div>
<div class="a" style="left:261.5px;top:265.19px;width:1px;height:18.65px;background:#f6f6f6"></div>
<div class="a" style="left:325.3px;top:265.19px;width:1px;height:18.65px;background:#f6f6f6"></div>
<div class="a" style="left:368.5px;top:265.19px;width:1px;height:18.65px;background:#f6f6f6"></div>
<div class="a" style="left:432.3px;top:265.19px;width:1px;height:18.65px;background:#f6f6f6"></div>
<div class="a" style="left:496.0px;top:265.19px;width:1px;height:18.65px;background:#f6f6f6"></div>
<div class="a" style="left:555.0px;top:265.19px;width:1px;height:18.65px;background:#f6f6f6"></div>
<div class="a" style="left:613.5px;top:265.19px;width:1px;height:18.65px;background:#f6f6f6"></div>
<div class="a" style="left:732.3px;top:265.19px;width:1px;height:18.65px;background:#f6f6f6"></div>
<div class="a" style="left:794.1px;top:265.19px;width:1px;height:18.65px;background:#f6f6f6"></div>
<div class="a" style="left:857.3px;top:265.19px;width:1px;height:18.65px;background:#f6f6f6"></div>
<div class="a" style="left:910.1px;top:265.19px;width:1px;height:18.65px;background:#f6f6f6"></div>
<div class="a" style="left:962.8px;top:265.19px;width:1px;height:18.65px;background:#f6f6f6"></div>
<div class="a" style="left:1017.0px;top:265.19px;width:1px;height:18.65px;background:#f6f6f6"></div>
<div class="a cb" style="left:8.2px;top:270.19px"></div>
<div class="a td" style="left:20.7px;top:268.49px;width:25.6px">178</div>
<div class="a td" style="left:262.0px;top:268.49px;width:63.8px">Praew</div>
<div class="a td" style="left:325.8px;top:268.49px;width:43.2px">NORMAL</div>
<div class="a td" style="left:369.0px;top:268.49px;width:63.8px">128</div>
<div class="a td" style="left:432.8px;top:268.49px;width:63.7px">39</div>
<div class="a td" style="left:496.5px;top:268.49px;width:59.0px">10</div>
<div class="a td" style="left:555.5px;top:268.49px;width:58.5px">2</div>
<div class="a td" style="left:614.0px;top:268.49px;width:118.8px">2020-01-10 13:45:18</div>
<div class="a td" style="left:732.8px;top:268.49px;width:61.8px">3000</div>
<div class="a td" style="left:794.6px;top:268.49px;width:63.2px">1581</div>
<div class="a td" style="left:857.8px;top:268.49px;width:52.8px">1579</div>
<div class="a td" style="left:910.6px;top:268.49px;width:52.7px">0</div>
<div class="a td" style="left:963.3px;top:268.49px;width:54.2px">2</div>
<div class="a td" style="left:1017.5px;top:268.49px;width:61.3px">0</div>
<div class="a" style="left:47.9px;top:269.19px;width:8px;height:5.5px;background:#bebebe"></div>
<div class="a" style="left:47.9px;top:274.69px;width:8px;height:5px;background:#d2d2d2"></div>
<div class="a" style="left:55.9px;top:269.19px;width:8px;height:5.5px;background:#b2b2b2"></div>
<div class="a" style="left:55.9px;top:274.69px;width:8px;height:5px;background:#b2b2b2"></div>
<div class="a" style="left:63.9px;top:269.19px;width:8px;height:5.5px;background:#c8c8c8"></div>
<div class="a" style="left:63.9px;top:274.69px;width:8px;height:5px;background:#dcdcdc"></div>
<div class="a" style="left:71.9px;top:269.19px;width:8px;height:5.5px;background:#c2c2c2"></div>
<div class="a" style="left:71.9px;top:274.69px;width:8px;height:5px;background:#c2c2c2"></div>
<div class="a" style="left:79.9px;top:269.19px;width:8px;height:5.5px;background:#c2c2c2"></div>
<div class="a" style="left:79.9px;top:274.69px;width:8px;height:5px;background:#d6d6d6"></div>
<div class="a" style="left:87.9px;top:269.19px;width:8px;height:5.5px;background:#e0e0e0"></div>
<div class="a" style="left:87.9px;top:274.69px;width:8px;height:5px;background:#e6e6e6"></div>
<div class="a" style="left:95.9px;top:269.19px;width:8px;height:5.5px;background:#e0e0e0"></div>
<div class="a" style="left:95.9px;top:274.69px;width:8px;height:5px;background:#e6e6e6"></div>
<div class="a" style="left:103.9px;top:269.19px;width:8px;height:5.5px;background:#bebebe"></div>
<div class="a" style="left:103.9px;top:274.69px;width:8px;height:5px;background:#d2d2d2"></div>
<div class="a" style="left:111.9px;top:269.19px;width:8px;height:5.5px;background:#c2c2c2"></div>
<div class="a" style="left:111.9px;top:274.69px;width:8px;height:5px;background:#cccccc"></div>
<div class="a" style="left:119.9px;top:269.19px;width:8px;height:5.5px;background:#bebebe"></div>
<div class="a" style="left:119.9px;top:274.69px;width:8px;height:5px;background:#c8c8c8"></div>
<div class="a" style="left:127.9px;top:269.19px;width:8px;height:5.5px;background:#c8c8c8"></div>
<div class="a" style="left:127.9px;top:274.69px;width:8px;height:5px;background:#d2d2d2"></div>
<div class="a" style="left:135.9px;top:269.19px;width:8px;height:5.5px;background:#c8c8c8"></div>
<div class="a" style="left:135.9px;top:274.69px;width:8px;height:5px;background:#e6e6e6"></div>
<div class="a" style="left:183.7px;top:269.19px;width:8px;height:5.5px;background:#c2c2c2"></div>
<div class="a" style="left:183.7px;top:274.69px;width:8px;height:5px;background:#cccccc"></div>
<div class="a" style="left:191.7px;top:269.19px;width:8px;height:5.5px;background:#b2b2b2"></div>
<div class="a" style="left:191.7px;top:274.69px;width:8px;height:5px;background:#d0d0d0"></div>
<div class="a" style="left:199.7px;top:269.19px;width:8px;height:5.5px;background:#b6b6b6"></div>
<div class="a" style="left:199.7px;top:274.69px;width:8px;height:5px;background:#b6b6b6"></div>
<div class="a" style="left:207.7px;top:269.19px;width:8px;height:5.5px;background:#acacac"></div>
<div class="a" style="left:207.7px;top:274.69px;width:8px;height:5px;background:#c0c0c0"></div>
<div class="a" style="left:215.7px;top:269.19px;width:8px;height:5.5px;background:#bababa"></div>
<div class="a" style="left:215.7px;top:274.69px;width:8px;height:5px;background:#cecece"></div>
<div class="a" style="left:223.7px;top:269.19px;width:8px;height:5.5px;background:#b2b2b2"></div>
<div class="a" style="left:223.7px;top:274.69px;width:8px;height:5px;background:#c6c6c6"></div>
<div class="a" style="left:4px;top:283.04px;width:1074.8px;height:19.85px;background:#faf9f9;box-shadow:inset 0 1px #fff,inset 0 -1px #fff"></div>
<div class="a" style="left:20.2px;top:283.84px;width:1px;height:18.65px;background:#f6f6f6"></div>
<div class="a" style="left:45.8px;top:283.84px;width:1px;height:18.65px;background:#f6f6f6"></div>
<div class="a" style="left:90.8px;top:283.84px;width:1px;height:18.65px;background:#f6f6f6"></div>
<div class="a" style="left:151.7px;top:283.84px;width:1px;height:18.65px;background:#f6f6f6"></div>
<div class="a" style="left:261.5px;top:283.84px;width:1px;height:18.65px;background:#f6f6f6"></div>
<div class="a" style="left:325.3px;top:283.84px;width:1px;height:18.65px;background:#f6f6f6"></div>
<div class="a" style="left:368.5px;top:283.84px;width:1px;height:18.65px;background:#f6f6f6"></div>
<div class="a" style="left:432.3px;top:283.84px;width:1px;height:18.65px;background:#f6f6f6"></div>
<div class="a" style="left:496.0px;top:283.84px;width:1px;height:18.65px;background:#f6f6f6"></div>
<div class="a" style="left:555.0px;top:283.84px;width:1px;height:18.65px;background:#f6f6f6"></div>
<div class="a" style="left:613.5px;top:283.84px;width:1px;height:18.65px;background:#f6f6f6"></div>
<div class="a" style="left:732.3px;top:283.84px;width:1px;height:18.65px;background:#f6f6f6"></div>
<div class="a" style="left:794.1px;top:283.84px;width:1px;height:18.65px;background:#f6f6f6"></div>
<div class="a" style="left:857.3px;top:283.84px;width:1px;height:18.65px;background:#f6f6f6"></div>
<div class="a" style="left:910.1px;top:283.84px;width:1px;height:18.65px;background:#f6f6f6"></div>
<div class="a" style="left:962.8px;top:283.84px;width:1px;height:18.65px;background:#f6f6f6"></div>
<div class="a" style="left:1017.0px;top:283.84px;width:1px;height:18.65px;background:#f6f6f6"></div>
<div class="a cb" style="left:8.2px;top:288.84px"></div>
<div class="a td" style="left:20.7px;top:287.14px;width:25.6px">150</div>
<div class="a td" style="left:262.0px;top:287.14px;width:63.8px">Praew</div>
<div class="a td" style="left:325.8px;top:287.14px;width:43.2px">NORMAL</div>
<div class="a td" style="left:369.0px;top:287.14px;width:63.8px">180</div>
<div class="a td" style="left:432.8px;top:287.14px;width:63.7px">39</div>
<div class="a td" style="left:496.5px;top:287.14px;width:59.0px">10</div>
<div class="a td" style="left:555.5px;top:287.14px;width:58.5px">2</div>
<div class="a td" style="left:614.0px;top:287.14px;width:118.8px">2020-01-11 02:54:55</div>
<div class="a td" style="left:732.8px;top:287.14px;width:61.8px">5000</div>
<div class="a td" style="left:794.6px;top:287.14px;width:63.2px">2882</div>
<div class="a td" style="left:857.8px;top:287.14px;width:52.8px">2876</div>
<div class="a td" style="left:910.6px;top:287.14px;width:52.7px">2</div>
<div class="a td" style="left:963.3px;top:287.14px;width:54.2px">4</div>
<div class="a td" style="left:1017.5px;top:287.14px;width:61.3px">0</div>
<div class="a" style="left:47.9px;top:287.84px;width:8px;height:5.5px;background:#dcdcdc"></div>
<div class="a" style="left:47.9px;top:293.34px;width:8px;height:5px;background:#e6e6e6"></div>
<div class="a" style="left:55.9px;top:287.84px;width:8px;height:5.5px;background:#d0d0d0"></div>
<div class="a" style="left:55.9px;top:293.34px;width:8px;height:5px;background:#d0d0d0"></div>
<div class="a" style="left:63.9px;top:287.84px;width:8px;height:5.5px;background:#cacaca"></div>
<div class="a" style="left:63.9px;top:293.34px;width:8px;height:5px;background:#cacaca"></div>
<div class="a" style="left:71.9px;top:287.84px;width:8px;height:5.5px;background:#cacaca"></div>
<div class="a" style="left:71.9px;top:293.34px;width:8px;height:5px;background:#e6e6e6"></div>
<div class="a" style="left:79.9px;top:287.84px;width:8px;height:5.5px;background:#cacaca"></div>
<div class="a" style="left:79.9px;top:293.34px;width:8px;height:5px;background:#dedede"></div>
<div class="a" style="left:87.9px;top:287.84px;width:8px;height:5.5px;background:#ececec"></div>
<div class="a" style="left:87.9px;top:293.34px;width:8px;height:5px;background:#e6e6e6"></div>
<div class="a" style="left:95.9px;top:287.84px;width:8px;height:5.5px;background:#e8e8e8"></div>
<div class="a" style="left:95.9px;top:293.34px;width:8px;height:5px;background:#e6e6e6"></div>
<div class="a" style="left:103.9px;top:287.84px;width:8px;height:5.5px;background:#dcdcdc"></div>
<div class="a" style="left:103.9px;top:293.34px;width:8px;height:5px;background:#e6e6e6"></div>
<div class="a" style="left:111.9px;top:287.84px;width:8px;height:5.5px;background:#e2e2e2"></div>
<div class="a" style="left:111.9px;top:293.34px;width:8px;height:5px;background:#e2e2e2"></div>
<div class="a" style="left:119.9px;top:287.84px;width:8px;height:5.5px;background:#e2e2e2"></div>
<div class="a" style="left:119.9px;top:293.34px;width:8px;height:5px;background:#e2e2e2"></div>
<div class="a" style="left:127.9px;top:287.84px;width:8px;height:5.5px;background:#d4d4d4"></div>
<div class="a" style="left:127.9px;top:293.34px;width:8px;height:5px;background:#dedede"></div>
<div class="a" style="left:135.9px;top:287.84px;width:8px;height:5.5px;background:#d4d4d4"></div>
<div class="a" style="left:135.9px;top:293.34px;width:8px;height:5px;background:#dedede"></div>
<div class="a" style="left:183.7px;top:287.84px;width:8px;height:5.5px;background:#d4d4d4"></div>
<div class="a" style="left:183.7px;top:293.34px;width:8px;height:5px;background:#e6e6e6"></div>
<div class="a" style="left:191.7px;top:287.84px;width:8px;height:5.5px;background:#c4c4c4"></div>
<div class="a" style="left:191.7px;top:293.34px;width:8px;height:5px;background:#e2e2e2"></div>
<div class="a" style="left:199.7px;top:287.84px;width:8px;height:5.5px;background:#d4d4d4"></div>
<div class="a" style="left:199.7px;top:293.34px;width:8px;height:5px;background:#e6e6e6"></div>
<div class="a" style="left:207.7px;top:287.84px;width:8px;height:5.5px;background:#dcdcdc"></div>
<div class="a" style="left:207.7px;top:293.34px;width:8px;height:5px;background:#dcdcdc"></div>
<div class="a" style="left:215.7px;top:287.84px;width:8px;height:5.5px;background:#dcdcdc"></div>
<div class="a" style="left:215.7px;top:293.34px;width:8px;height:5px;background:#e6e6e6"></div>
<div class="a" style="left:4px;top:302.88px;width:1074.8px;height:17.45px;background:#e8e8e8;"></div>
<div class="a" style="left:20.2px;top:302.48px;width:1px;height:18.65px;background:#f6f6f6"></div>
<div class="a" style="left:45.8px;top:302.48px;width:1px;height:18.65px;background:#f6f6f6"></div>
<div class="a" style="left:90.8px;top:302.48px;width:1px;height:18.65px;background:#f6f6f6"></div>
<div class="a" style="left:151.7px;top:302.48px;width:1px;height:18.65px;background:#f6f6f6"></div>
<div class="a" style="left:261.5px;top:302.48px;width:1px;height:18.65px;background:#f6f6f6"></div>
<div class="a" style="left:325.3px;top:302.48px;width:1px;height:18.65px;background:#f6f6f6"></div>
<div class="a" style="left:368.5px;top:302.48px;width:1px;height:18.65px;background:#f6f6f6"></div>
<div class="a" style="left:432.3px;top:302.48px;width:1px;height:18.65px;background:#f6f6f6"></div>
<div class="a" style="left:496.0px;top:302.48px;width:1px;height:18.65px;background:#f6f6f6"></div>
<div class="a" style="left:555.0px;top:302.48px;width:1px;height:18.65px;background:#f6f6f6"></div>
<div class="a" style="left:613.5px;top:302.48px;width:1px;height:18.65px;background:#f6f6f6"></div>
<div class="a" style="left:732.3px;top:302.48px;width:1px;height:18.65px;background:#f6f6f6"></div>
<div class="a" style="left:794.1px;top:302.48px;width:1px;height:18.65px;background:#f6f6f6"></div>
<div class="a" style="left:857.3px;top:302.48px;width:1px;height:18.65px;background:#f6f6f6"></div>
<div class="a" style="left:910.1px;top:302.48px;width:1px;height:18.65px;background:#f6f6f6"></div>
<div class="a" style="left:962.8px;top:302.48px;width:1px;height:18.65px;background:#f6f6f6"></div>
<div class="a" style="left:1017.0px;top:302.48px;width:1px;height:18.65px;background:#f6f6f6"></div>
<div class="a cb" style="left:8.2px;top:307.48px"></div>
<div class="a td" style="left:20.7px;top:305.78px;width:25.6px">145</div>
<div class="a td" style="left:262.0px;top:305.78px;width:63.8px">Praew</div>
<div class="a td" style="left:325.8px;top:305.78px;width:43.2px">NORMAL</div>
<div class="a td" style="left:369.0px;top:305.78px;width:63.8px">107</div>
<div class="a td" style="left:432.8px;top:305.78px;width:63.7px">38</div>
<div class="a td" style="left:496.5px;top:305.78px;width:59.0px">9</div>
<div class="a td" style="left:555.5px;top:305.78px;width:58.5px">0</div>
<div class="a td" style="left:614.0px;top:305.78px;width:118.8px">2020-01-09 10:20:40</div>
<div class="a td" style="left:732.8px;top:305.78px;width:61.8px">3000</div>
<div class="a td" style="left:794.6px;top:305.78px;width:63.2px">2930</div>
<div class="a td" style="left:857.8px;top:305.78px;width:52.8px">2801</div>
<div class="a td" style="left:910.6px;top:305.78px;width:52.7px">5</div>
<div class="a td" style="left:963.3px;top:305.78px;width:54.2px">122</div>
<div class="a td" style="left:1017.5px;top:305.78px;width:61.3px">2</div>
<div class="a" style="left:47.9px;top:306.48px;width:8px;height:5.5px;background:#b2b2b2"></div>
<div class="a" style="left:47.9px;top:311.98px;width:8px;height:5px;background:#b2b2b2"></div>
<div class="a" style="left:55.9px;top:306.48px;width:8px;height:5.5px;background:#b2b2b2"></div>
<div class="a" style="left:55.9px;top:311.98px;width:8px;height:5px;background:#d0d0d0"></div>
<div class="a" style="left:63.9px;top:306.48px;width:8px;height:5.5px;background:#c8c8c8"></div>
<div class="a" style="left:63.9px;top:311.98px;width:8px;height:5px;background:#d2d2d2"></div>
<div class="a" style="left:71.9px;top:306.48px;width:8px;height:5.5px;background:#bebebe"></div>
<div class="a" style="left:71.9px;top:311.98px;width:8px;height:5px;background:#dcdcdc"></div>
<div class="a" style="left:79.9px;top:306.48px;width:8px;height:5.5px;background:#c2c2c2"></div>
<div class="a" style="left:79.9px;top:311.98px;width:8px;height:5px;background:#d6d6d6"></div>
<div class="a" style="left:87.9px;top:306.48px;width:8px;height:5.5px;background:#dcdcdc"></div>
<div class="a" style="left:87.9px;top:311.98px;width:8px;height:5px;background:#e6e6e6"></div>
<div class="a" style="left:95.9px;top:306.48px;width:8px;height:5.5px;background:#d8d8d8"></div>
<div class="a" style="left:95.9px;top:311.98px;width:8px;height:5px;background:#d8d8d8"></div>
<div class="a" style="left:103.9px;top:306.48px;width:8px;height:5.5px;background:#c8c8c8"></div>
<div class="a" style="left:103.9px;top:311.98px;width:8px;height:5px;background:#c8c8c8"></div>
<div class="a" style="left:111.9px;top:306.48px;width:8px;height:5.5px;background:#bebebe"></div>
<div class="a" style="left:111.9px;top:311.98px;width:8px;height:5px;background:#c8c8c8"></div>
<div class="a" style="left:119.9px;top:306.48px;width:8px;height:5.5px;background:#bababa"></div>
<div class="a" style="left:119.9px;top:311.98px;width:8px;height:5px;background:#c4c4c4"></div>
<div class="a" style="left:127.9px;top:306.48px;width:8px;height:5.5px;background:#c8c8c8"></div>
<div class="a" style="left:127.9px;top:311.98px;width:8px;height:5px;background:#d2d2d2"></div>
<div class="a" style="left:135.9px;top:306.48px;width:8px;height:5.5px;background:#acacac"></div>
<div class="a" style="left:135.9px;top:311.98px;width:8px;height:5px;background:#c0c0c0"></div>
<div class="a" style="left:183.7px;top:306.48px;width:8px;height:5.5px;background:#b2b2b2"></div>
<div class="a" style="left:183.7px;top:311.98px;width:8px;height:5px;background:#c6c6c6"></div>
<div class="a" style="left:191.7px;top:306.48px;width:8px;height:5.5px;background:#bebebe"></div>
<div class="a" style="left:191.7px;top:311.98px;width:8px;height:5px;background:#c8c8c8"></div>
<div class="a" style="left:199.7px;top:306.48px;width:8px;height:5.5px;background:#c8c8c8"></div>
<div class="a" style="left:199.7px;top:311.98px;width:8px;height:5px;background:#dcdcdc"></div>
<div class="a" style="left:207.7px;top:306.48px;width:8px;height:5.5px;background:#b6b6b6"></div>
<div class="a" style="left:207.7px;top:311.98px;width:8px;height:5px;background:#d4d4d4"></div>
<div class="a" style="left:215.7px;top:306.48px;width:8px;height:5.5px;background:#c8c8c8"></div>
<div class="a" style="left:215.7px;top:311.98px;width:8px;height:5px;background:#d2d2d2"></div>
<div class="a" style="left:223.7px;top:306.48px;width:8px;height:5.5px;background:#acacac"></div>
<div class="a" style="left:223.7px;top:311.98px;width:8px;height:5px;background:#c0c0c0"></div>
<div class="a" style="left:4px;top:320.33px;width:1074.8px;height:19.85px;background:#faf9f9;box-shadow:inset 0 1px #fff,inset 0 -1px #fff"></div>
<div class="a" style="left:20.2px;top:321.13px;width:1px;height:18.65px;background:#f6f6f6"></div>
<div class="a" style="left:45.8px;top:321.13px;width:1px;height:18.65px;background:#f6f6f6"></div>
<div class="a" style="left:90.8px;top:321.13px;width:1px;height:18.65px;background:#f6f6f6"></div>
<div class="a" style="left:151.7px;top:321.13px;width:1px;height:18.65px;background:#f6f6f6"></div>
<div class="a" style="left:261.5px;top:321.13px;width:1px;height:18.65px;background:#f6f6f6"></div>
<div class="a" style="left:325.3px;top:321.13px;width:1px;height:18.65px;background:#f6f6f6"></div>
<div class="a" style="left:368.5px;top:321.13px;width:1px;height:18.65px;background:#f6f6f6"></div>
<div class="a" style="left:432.3px;top:321.13px;width:1px;height:18.65px;background:#f6f6f6"></div>
<div class="a" style="left:496.0px;top:321.13px;width:1px;height:18.65px;background:#f6f6f6"></div>
<div class="a" style="left:555.0px;top:321.13px;width:1px;height:18.65px;background:#f6f6f6"></div>
<div class="a" style="left:613.5px;top:321.13px;width:1px;height:18.65px;background:#f6f6f6"></div>
<div class="a" style="left:732.3px;top:321.13px;width:1px;height:18.65px;background:#f6f6f6"></div>
<div class="a" style="left:794.1px;top:321.13px;width:1px;height:18.65px;background:#f6f6f6"></div>
<div class="a" style="left:857.3px;top:321.13px;width:1px;height:18.65px;background:#f6f6f6"></div>
<div class="a" style="left:910.1px;top:321.13px;width:1px;height:18.65px;background:#f6f6f6"></div>
<div class="a" style="left:962.8px;top:321.13px;width:1px;height:18.65px;background:#f6f6f6"></div>
<div class="a" style="left:1017.0px;top:321.13px;width:1px;height:18.65px;background:#f6f6f6"></div>
<div class="a cb" style="left:8.2px;top:326.13px"></div>
<div class="a td" style="left:20.7px;top:324.43px;width:25.6px">173</div>
<div class="a td" style="left:262.0px;top:324.43px;width:63.8px">Praew</div>
<div class="a td" style="left:325.8px;top:324.43px;width:43.2px">NORMAL</div>
<div class="a td" style="left:369.0px;top:324.43px;width:63.8px">194</div>
<div class="a td" style="left:432.8px;top:324.43px;width:63.7px">38</div>
<div class="a td" style="left:496.5px;top:324.43px;width:59.0px">7</div>
<div class="a td" style="left:555.5px;top:324.43px;width:58.5px">0</div>
<div class="a td" style="left:614.0px;top:324.43px;width:118.8px">2020-01-07 10:21:29</div>
<div class="a td" style="left:732.8px;top:324.43px;width:61.8px">5000</div>
<div class="a td" style="left:794.6px;top:324.43px;width:63.2px">2572</div>
<div class="a td" style="left:857.8px;top:324.43px;width:52.8px">2569</div>
<div class="a td" style="left:910.6px;top:324.43px;width:52.7px">2</div>
<div class="a td" style="left:963.3px;top:324.43px;width:54.2px">0</div>
<div class="a td" style="left:1017.5px;top:324.43px;width:61.3px">1</div>
<div class="a" style="left:47.9px;top:326.63px;width:8px;height:8px;background:#dcdcdc"></div>
<div class="a" style="left:55.9px;top:326.63px;width:8px;height:8px;background:#d8d8d8"></div>
<div class="a" style="left:63.9px;top:326.63px;width:8px;height:8px;background:#e2e2e2"></div>
<div class="a" style="left:71.9px;top:326.63px;width:8px;height:8px;background:#d8d8d8"></div>
<div class="a" style="left:79.9px;top:326.63px;width:8px;height:8px;background:#d4d4d4"></div>
<div class="a" style="left:87.9px;top:326.63px;width:8px;height:8px;background:#ececec"></div>
<div class="a" style="left:95.9px;top:326.63px;width:8px;height:8px;background:#ececec"></div>
<div class="a" style="left:103.9px;top:326.63px;width:8px;height:8px;background:#d8d8d8"></div>
<div class="a" style="left:111.9px;top:326.63px;width:8px;height:8px;background:#d8d8d8"></div>
<div class="a" style="left:119.9px;top:326.63px;width:8px;height:8px;background:#c4c4c4"></div>
<div class="a" style="left:127.9px;top:326.63px;width:8px;height:8px;background:#e2e2e2"></div>
<div class="a" style="left:135.9px;top:326.63px;width:8px;height:8px;background:#d4d4d4"></div>
<div class="a" style="left:183.7px;top:326.63px;width:8px;height:8px;background:#e2e2e2"></div>
<div class="a" style="left:191.7px;top:326.63px;width:8px;height:8px;background:#cacaca"></div>
<div class="a" style="left:199.7px;top:326.63px;width:8px;height:8px;background:#d8d8d8"></div>
<div class="a" style="left:207.7px;top:326.63px;width:8px;height:8px;background:#c4c4c4"></div>
<div class="a" style="left:215.7px;top:326.63px;width:8px;height:8px;background:#e2e2e2"></div>
<div class="a" style="left:223.7px;top:326.63px;width:8px;height:8px;background:#e2e2e2"></div>
<div class="a" style="left:4px;top:340.18px;width:1074.8px;height:17.45px;background:#e8e8e8;"></div>
<div class="a" style="left:20.2px;top:339.78px;width:1px;height:18.65px;background:#f6f6f6"></div>
<div class="a" style="left:45.8px;top:339.78px;width:1px;height:18.65px;background:#f6f6f6"></div>
<div class="a" style="left:90.8px;top:339.78px;width:1px;height:18.65px;background:#f6f6f6"></div>
<div class="a" style="left:151.7px;top:339.78px;width:1px;height:18.65px;background:#f6f6f6"></div>
<div class="a" style="left:261.5px;top:339.78px;width:1px;height:18.65px;background:#f6f6f6"></div>
<div class="a" style="left:325.3px;top:339.78px;width:1px;height:18.65px;background:#f6f6f6"></div>
<div class="a" style="left:368.5px;top:339.78px;width:1px;height:18.65px;background:#f6f6f6"></div>
<div class="a" style="left:432.3px;top:339.78px;width:1px;height:18.65px;background:#f6f6f6"></div>
<div class="a" style="left:496.0px;top:339.78px;width:1px;height:18.65px;background:#f6f6f6"></div>
<div class="a" style="left:555.0px;top:339.78px;width:1px;height:18.65px;background:#f6f6f6"></div>
<div class="a" style="left:613.5px;top:339.78px;width:1px;height:18.65px;background:#f6f6f6"></div>
<div class="a" style="left:732.3px;top:339.78px;width:1px;height:18.65px;background:#f6f6f6"></div>
<div class="a" style="left:794.1px;top:339.78px;width:1px;height:18.65px;background:#f6f6f6"></div>
<div class="a" style="left:857.3px;top:339.78px;width:1px;height:18.65px;background:#f6f6f6"></div>
<div class="a" style="left:910.1px;top:339.78px;width:1px;height:18.65px;background:#f6f6f6"></div>
<div class="a" style="left:962.8px;top:339.78px;width:1px;height:18.65px;background:#f6f6f6"></div>
<div class="a" style="left:1017.0px;top:339.78px;width:1px;height:18.65px;background:#f6f6f6"></div>
<div class="a cb" style="left:8.2px;top:344.78px"></div>
<div class="a td" style="left:20.7px;top:343.08px;width:25.6px">131</div>
<div class="a td" style="left:262.0px;top:343.08px;width:63.8px">Praew</div>
<div class="a td" style="left:325.8px;top:343.08px;width:43.2px">NORMAL</div>
<div class="a td" style="left:369.0px;top:343.08px;width:63.8px">217</div>
<div class="a td" style="left:432.8px;top:343.08px;width:63.7px">36</div>
<div class="a td" style="left:496.5px;top:343.08px;width:59.0px">7</div>
<div class="a td" style="left:555.5px;top:343.08px;width:58.5px">1</div>
<div class="a td" style="left:614.0px;top:343.08px;width:118.8px">2020-01-10 04:19:22</div>
<div class="a td" style="left:732.8px;top:343.08px;width:61.8px">5000</div>
<div class="a td" style="left:794.6px;top:343.08px;width:63.2px">1564</div>
<div class="a td" style="left:857.8px;top:343.08px;width:52.8px">1559</div>
<div class="a td" style="left:910.6px;top:343.08px;width:52.7px">3</div>
<div class="a td" style="left:963.3px;top:343.08px;width:54.2px">1</div>
<div class="a td" style="left:1017.5px;top:343.08px;width:61.3px">1</div>
<div class="a" style="left:63.9px;top:343.78px;width:8px;height:5.5px;background:#b2b2b2"></div>
<div class="a" style="left:63.9px;top:349.28px;width:8px;height:5px;background:#d0d0d0"></div>
<div class="a" style="left:71.9px;top:343.78px;width:8px;height:5.5px;background:#bebebe"></div>
<div class="a" style="left:71.9px;top:349.28px;width:8px;height:5px;background:#bebebe"></div>
<div class="a" style="left:79.9px;top:343.78px;width:8px;height:5.5px;background:#bebebe"></div>
<div class="a" style="left:79.9px;top:349.28px;width:8px;height:5px;background:#bebebe"></div>
<div class="a" style="left:87.9px;top:343.78px;width:8px;height:5.5px;background:#e0e0e0"></div>
<div class="a" style="left:87.9px;top:349.28px;width:8px;height:5px;background:#e6e6e6"></div>
<div class="a" style="left:95.9px;top:343.78px;width:8px;height:5.5px;background:#d8d8d8"></div>
<div class="a" style="left:95.9px;top:349.28px;width:8px;height:5px;background:#d8d8d8"></div>
<div class="a" style="left:103.9px;top:343.78px;width:8px;height:5.5px;background:#b2b2b2"></div>
<div class="a" style="left:103.9px;top:349.28px;width:8px;height:5px;background:#bcbcbc"></div>
<div class="a" style="left:111.9px;top:343.78px;width:8px;height:5.5px;background:#b6b6b6"></div>
<div class="a" style="left:111.9px;top:349.28px;width:8px;height:5px;background:#b6b6b6"></div>
<div class="a" style="left:119.9px;top:343.78px;width:8px;height:5.5px;background:#c8c8c8"></div>
<div class="a" style="left:119.9px;top:349.28px;width:8px;height:5px;background:#c8c8c8"></div>
<div class="a" style="left:127.9px;top:343.78px;width:8px;height:5.5px;background:#bebebe"></div>
<div class="a" style="left:127.9px;top:349.28px;width:8px;height:5px;background:#dcdcdc"></div>
<div class="a" style="left:135.9px;top:343.78px;width:8px;height:5.5px;background:#bebebe"></div>
<div class="a" style="left:135.9px;top:349.28px;width:8px;height:5px;background:#bebebe"></div>
<div class="a" style="left:183.7px;top:343.78px;width:8px;height:5.5px;background:#c8c8c8"></div>
<div class="a" style="left:183.7px;top:349.28px;width:8px;height:5px;background:#c8c8c8"></div>
<div class="a" style="left:191.7px;top:343.78px;width:8px;height:5.5px;background:#bababa"></div>
<div class="a" style="left:191.7px;top:349.28px;width:8px;height:5px;background:#cecece"></div>
<div class="a" style="left:199.7px;top:343.78px;width:8px;height:5.5px;background:#bebebe"></div>
<div class="a" style="left:199.7px;top:349.28px;width:8px;height:5px;background:#c8c8c8"></div>
<div class="a" style="left:207.7px;top:343.78px;width:8px;height:5.5px;background:#c2c2c2"></div>
<div class="a" style="left:207.7px;top:349.28px;width:8px;height:5px;background:#d6d6d6"></div>
<div class="a" style="left:215.7px;top:343.78px;width:8px;height:5.5px;background:#bababa"></div>
<div class="a" style="left:215.7px;top:349.28px;width:8px;height:5px;background:#d8d8d8"></div>
<div class="a" style="left:4px;top:357.63px;width:1074.8px;height:19.85px;background:#faf9f9;box-shadow:inset 0 1px #fff,inset 0 -1px #fff"></div>
<div class="a" style="left:20.2px;top:358.43px;width:1px;height:18.65px;background:#f6f6f6"></div>
<div class="a" style="left:45.8px;top:358.43px;width:1px;height:18.65px;background:#f6f6f6"></div>
<div class="a" style="left:90.8px;top:358.43px;width:1px;height:18.65px;background:#f6f6f6"></div>
<div class="a" style="left:151.7px;top:358.43px;width:1px;height:18.65px;background:#f6f6f6"></div>
<div class="a" style="left:261.5px;top:358.43px;width:1px;height:18.65px;background:#f6f6f6"></div>
<div class="a" style="left:325.3px;top:358.43px;width:1px;height:18.65px;background:#f6f6f6"></div>
<div class="a" style="left:368.5px;top:358.43px;width:1px;height:18.65px;background:#f6f6f6"></div>
<div class="a" style="left:432.3px;top:358.43px;width:1px;height:18.65px;background:#f6f6f6"></div>
<div class="a" style="left:496.0px;top:358.43px;width:1px;height:18.65px;background:#f6f6f6"></div>
<div class="a" style="left:555.0px;top:358.43px;width:1px;height:18.65px;background:#f6f6f6"></div>
<div class="a" style="left:613.5px;top:358.43px;width:1px;height:18.65px;background:#f6f6f6"></div>
<div class="a" style="left:732.3px;top:358.43px;width:1px;height:18.65px;background:#f6f6f6"></div>
<div class="a" style="left:794.1px;top:358.43px;width:1px;height:18.65px;background:#f6f6f6"></div>
<div class="a" style="left:857.3px;top:358.43px;width:1px;height:18.65px;background:#f6f6f6"></div>
<div class="a" style="left:910.1px;top:358.43px;width:1px;height:18.65px;background:#f6f6f6"></div>
<div class="a" style="left:962.8px;top:358.43px;width:1px;height:18.65px;background:#f6f6f6"></div>
<div class="a" style="left:1017.0px;top:358.43px;width:1px;height:18.65px;background:#f6f6f6"></div>
<div class="a cb" style="left:8.2px;top:363.43px"></div>
<div class="a td" style="left:20.7px;top:361.73px;width:25.6px">189</div>
<div class="a td" style="left:262.0px;top:361.73px;width:63.8px">Praew</div>
<div class="a td" style="left:325.8px;top:361.73px;width:43.2px">NORMAL</div>
<div class="a td" style="left:369.0px;top:361.73px;width:63.8px">247</div>
<div class="a td" style="left:432.8px;top:361.73px;width:63.7px">34</div>
<div class="a td" style="left:496.5px;top:361.73px;width:59.0px">8</div>
<div class="a td" style="left:555.5px;top:361.73px;width:58.5px">0</div>
<div class="a td" style="left:614.0px;top:361.73px;width:118.8px">2020-01-07 16:25:17</div>
<div class="a td" style="left:732.8px;top:361.73px;width:61.8px">5000</div>
<div class="a td" style="left:794.6px;top:361.73px;width:63.2px">2624</div>
<div class="a td" style="left:857.8px;top:361.73px;width:52.8px">2604</div>
<div class="a td" style="left:910.6px;top:361.73px;width:52.7px">7</div>
<div class="a td" style="left:963.3px;top:361.73px;width:54.2px">0</div>
<div class="a td" style="left:1017.5px;top:361.73px;width:61.3px">13</div>
<div class="a" style="left:47.9px;top:363.93px;width:8px;height:8px;background:#cacaca"></div>
<div class="a" style="left:55.9px;top:363.93px;width:8px;height:8px;background:#dcdcdc"></div>
<div class="a" style="left:63.9px;top:363.93px;width:8px;height:8px;background:#d8d8d8"></div>
<div class="a" style="left:71.9px;top:363.93px;width:8px;height:8px;background:#d0d0d0"></div>
<div class="a" style="left:79.9px;top:363.93px;width:8px;height:8px;background:#d8d8d8"></div>
<div class="a" style="left:87.9px;top:363.93px;width:8px;height:8px;background:#ececec"></div>
<div class="a" style="left:95.9px;top:363.93px;width:8px;height:8px;background:#f4f4f4"></div>
<div class="a" style="left:103.9px;top:363.93px;width:8px;height:8px;background:#cacaca"></div>
<div class="a" style="left:111.9px;top:363.93px;width:8px;height:8px;background:#d4d4d4"></div>
<div class="a" style="left:119.9px;top:363.93px;width:8px;height:8px;background:#c4c4c4"></div>
<div class="a" style="left:127.9px;top:363.93px;width:8px;height:8px;background:#d4d4d4"></div>
<div class="a" style="left:135.9px;top:363.93px;width:8px;height:8px;background:#d4d4d4"></div>
<div class="a" style="left:183.7px;top:363.93px;width:8px;height:8px;background:#d0d0d0"></div>
<div class="a" style="left:191.7px;top:363.93px;width:8px;height:8px;background:#c4c4c4"></div>
<div class="a" style="left:199.7px;top:363.93px;width:8px;height:8px;background:#dcdcdc"></div>
<div class="a" style="left:207.7px;top:363.93px;width:8px;height:8px;background:#cacaca"></div>
<div class="a" style="left:4px;top:377.48px;width:1074.8px;height:17.45px;background:#e8e8e8;"></div>
<div class="a" style="left:20.2px;top:377.08px;width:1px;height:18.65px;background:#f6f6f6"></div>
<div class="a" style="left:45.8px;top:377.08px;width:1px;height:18.65px;background:#f6f6f6"></div>
<div class="a" style="left:90.8px;top:377.08px;width:1px;height:18.65px;background:#f6f6f6"></div>
<div class="a" style="left:151.7px;top:377.08px;width:1px;height:18.65px;background:#f6f6f6"></div>
<div class="a" style="left:261.5px;top:377.08px;width:1px;height:18.65px;background:#f6f6f6"></div>
<div class="a" style="left:325.3px;top:377.08px;width:1px;height:18.65px;background:#f6f6f6"></div>
<div class="a" style="left:368.5px;top:377.08px;width:1px;height:18.65px;background:#f6f6f6"></div>
<div class="a" style="left:432.3px;top:377.08px;width:1px;height:18.65px;background:#f6f6f6"></div>
<div class="a" style="left:496.0px;top:377.08px;width:1px;height:18.65px;background:#f6f6f6"></div>
<div class="a" style="left:555.0px;top:377.08px;width:1px;height:18.65px;background:#f6f6f6"></div>
<div class="a" style="left:613.5px;top:377.08px;width:1px;height:18.65px;background:#f6f6f6"></div>
<div class="a" style="left:732.3px;top:377.08px;width:1px;height:18.65px;background:#f6f6f6"></div>
<div class="a" style="left:794.1px;top:377.08px;width:1px;height:18.65px;background:#f6f6f6"></div>
<div class="a" style="left:857.3px;top:377.08px;width:1px;height:18.65px;background:#f6f6f6"></div>
<div class="a" style="left:910.1px;top:377.08px;width:1px;height:18.65px;background:#f6f6f6"></div>
<div class="a" style="left:962.8px;top:377.08px;width:1px;height:18.65px;background:#f6f6f6"></div>
<div class="a" style="left:1017.0px;top:377.08px;width:1px;height:18.65px;background:#f6f6f6"></div>
<div class="a cb" style="left:8.2px;top:382.08px"></div>
<div class="a td" style="left:20.7px;top:380.38px;width:25.6px">163</div>
<div class="a td" style="left:262.0px;top:380.38px;width:63.8px">Praew</div>
<div class="a td" style="left:325.8px;top:380.38px;width:43.2px">NORMAL</div>
<div class="a td" style="left:369.0px;top:380.38px;width:63.8px">190</div>
<div class="a td" style="left:432.8px;top:380.38px;width:63.7px">34</div>
<div class="a td" style="left:496.5px;top:380.38px;width:59.0px">6</div>
<div class="a td" style="left:555.5px;top:380.38px;width:58.5px">0</div>
<div class="a td" style="left:614.0px;top:380.38px;width:118.8px">2020-01-07 10:38:26</div>
<div class="a td" style="left:732.8px;top:380.38px;width:61.8px">5000</div>
<div class="a td" style="left:794.6px;top:380.38px;width:63.2px">2545</div>
<div class="a td" style="left:857.8px;top:380.38px;width:52.8px">2541</div>
<div class="a td" style="left:910.6px;top:380.38px;width:52.7px">2</div>
<div class="a td" style="left:963.3px;top:380.38px;width:54.2px">1</div>
<div class="a td" style="left:1017.5px;top:380.38px;width:61.3px">1</div>
<div class="a" style="left:47.9px;top:381.08px;width:8px;height:5.5px;background:#b2b2b2"></div>
<div class="a" style="left:47.9px;top:386.58px;width:8px;height:5px;background:#c6c6c6"></div>
<div class="a" style="left:55.9px;top:381.08px;width:8px;height:5.5px;background:#c8c8c8"></div>
<div class="a" style="left:55.9px;top:386.58px;width:8px;height:5px;background:#c8c8c8"></div>
<div class="a" style="left:63.9px;top:381.08px;width:8px;height:5.5px;background:#c8c8c8"></div>
<div class="a" style="left:63.9px;top:386.58px;width:8px;height:5px;background:#d2d2d2"></div>
<div class="a" style="left:71.9px;top:381.08px;width:8px;height:5.5px;background:#c2c2c2"></div>
<div class="a" style="left:71.9px;top:386.58px;width:8px;height:5px;background:#d6d6d6"></div>
<div class="a" style="left:79.9px;top:381.08px;width:8px;height:5.5px;background:#b2b2b2"></div>
<div class="a" style="left:79.9px;top:386.58px;width:8px;height:5px;background:#c6c6c6"></div>
<div class="a" style="left:87.9px;top:381.08px;width:8px;height:5.5px;background:#dcdcdc"></div>
<div class="a" style="left:87.9px;top:386.58px;width:8px;height:5px;background:#e6e6e6"></div>
<div class="a" style="left:95.9px;top:381.08px;width:8px;height:5.5px;background:#dcdcdc"></div>
<div class="a" style="left:95.9px;top:386.58px;width:8px;height:5px;background:#dcdcdc"></div>
<div class="a" style="left:103.9px;top:381.08px;width:8px;height:5.5px;background:#bababa"></div>
<div class="a" style="left:103.9px;top:386.58px;width:8px;height:5px;background:#d8d8d8"></div>
<div class="a" style="left:111.9px;top:381.08px;width:8px;height:5.5px;background:#b2b2b2"></div>
<div class="a" style="left:111.9px;top:386.58px;width:8px;height:5px;background:#bcbcbc"></div>
<div class="a" style="left:119.9px;top:381.08px;width:8px;height:5.5px;background:#b2b2b2"></div>
<div class="a" style="left:119.9px;top:386.58px;width:8px;height:5px;background:#d0d0d0"></div>
<div class="a" style="left:127.9px;top:381.08px;width:8px;height:5.5px;background:#bebebe"></div>
<div class="a" style="left:127.9px;top:386.58px;width:8px;height:5px;background:#dcdcdc"></div>
<div class="a" style="left:135.9px;top:381.08px;width:8px;height:5.5px;background:#b6b6b6"></div>
<div class="a" style="left:135.9px;top:386.58px;width:8px;height:5px;background:#d4d4d4"></div>
<div class="a" style="left:183.7px;top:381.08px;width:8px;height:5.5px;background:#b2b2b2"></div>
<div class="a" style="left:183.7px;top:386.58px;width:8px;height:5px;background:#c6c6c6"></div>
<div class="a" style="left:191.7px;top:381.08px;width:8px;height:5.5px;background:#b6b6b6"></div>
<div class="a" style="left:191.7px;top:386.58px;width:8px;height:5px;background:#b6b6b6"></div>
<div class="a" style="left:199.7px;top:381.08px;width:8px;height:5.5px;background:#c2c2c2"></div>
<div class="a" style="left:199.7px;top:386.58px;width:8px;height:5px;background:#d6d6d6"></div>
<div class="a" style="left:207.7px;top:381.08px;width:8px;height:5.5px;background:#acacac"></div>
<div class="a" style="left:207.7px;top:386.58px;width:8px;height:5px;background:#c0c0c0"></div>
<div class="a" style="left:215.7px;top:381.08px;width:8px;height:5.5px;background:#bebebe"></div>
<div class="a" style="left:215.7px;top:386.58px;width:8px;height:5px;background:#dcdcdc"></div>
<div class="a" style="left:223.7px;top:381.08px;width:8px;height:5.5px;background:#bababa"></div>
<div class="a" style="left:223.7px;top:386.58px;width:8px;height:5px;background:#bababa"></div>
<div class="a" style="left:4px;top:394.92px;width:1074.8px;height:19.85px;background:#faf9f9;box-shadow:inset 0 1px #fff,inset 0 -1px #fff"></div>
<div class="a" style="left:20.2px;top:395.72px;width:1px;height:18.65px;background:#f6f6f6"></div>
<div class="a" style="left:45.8px;top:395.72px;width:1px;height:18.65px;background:#f6f6f6"></div>
<div class="a" style="left:90.8px;top:395.72px;width:1px;height:18.65px;background:#f6f6f6"></div>
<div class="a" style="left:151.7px;top:395.72px;width:1px;height:18.65px;background:#f6f6f6"></div>
<div class="a" style="left:261.5px;top:395.72px;width:1px;height:18.65px;background:#f6f6f6"></div>
<div class="a" style="left:325.3px;top:395.72px;width:1px;height:18.65px;background:#f6f6f6"></div>
<div class="a" style="left:368.5px;top:395.72px;width:1px;height:18.65px;background:#f6f6f6"></div>
<div class="a" style="left:432.3px;top:395.72px;width:1px;height:18.65px;background:#f6f6f6"></div>
<div class="a" style="left:496.0px;top:395.72px;width:1px;height:18.65px;background:#f6f6f6"></div>
<div class="a" style="left:555.0px;top:395.72px;width:1px;height:18.65px;background:#f6f6f6"></div>
<div class="a" style="left:613.5px;top:395.72px;width:1px;height:18.65px;background:#f6f6f6"></div>
<div class="a" style="left:732.3px;top:395.72px;width:1px;height:18.65px;background:#f6f6f6"></div>
<div class="a" style="left:794.1px;top:395.72px;width:1px;height:18.65px;background:#f6f6f6"></div>
<div class="a" style="left:857.3px;top:395.72px;width:1px;height:18.65px;background:#f6f6f6"></div>
<div class="a" style="left:910.1px;top:395.72px;width:1px;height:18.65px;background:#f6f6f6"></div>
<div class="a" style="left:962.8px;top:395.72px;width:1px;height:18.65px;background:#f6f6f6"></div>
<div class="a" style="left:1017.0px;top:395.72px;width:1px;height:18.65px;background:#f6f6f6"></div>
<div class="a cb" style="left:8.2px;top:400.72px"></div>
<div class="a td" style="left:20.7px;top:399.02px;width:25.6px">410</div>
<div class="a td" style="left:262.0px;top:399.02px;width:63.8px">B1-mt</div>
<div class="a td" style="left:325.8px;top:399.02px;width:43.2px">NORMAL</div>
<div class="a td" style="left:369.0px;top:399.02px;width:63.8px">103</div>
<div class="a td" style="left:432.8px;top:399.02px;width:63.7px">34</div>
<div class="a td" style="left:496.5px;top:399.02px;width:59.0px">11</div>
<div class="a td" style="left:555.5px;top:399.02px;width:58.5px">2</div>
<div class="a td" style="left:614.0px;top:399.02px;width:118.8px">2020-01-10 21:55:40</div>
<div class="a td" style="left:732.8px;top:399.02px;width:61.8px">3000</div>
<div class="a td" style="left:794.6px;top:399.02px;width:63.2px">2959</div>
<div class="a td" style="left:857.8px;top:399.02px;width:52.8px">2783</div>
<div class="a td" style="left:910.6px;top:399.02px;width:52.7px">0</div>
<div class="a td" style="left:963.3px;top:399.02px;width:54.2px">156</div>
<div class="a td" style="left:1017.5px;top:399.02px;width:61.3px">20</div>
<div class="a" style="left:47.9px;top:399.72px;width:8px;height:5.5px;background:#d8d8d8"></div>
<div class="a" style="left:47.9px;top:405.22px;width:8px;height:5px;background:#e6e6e6"></div>
<div class="a" style="left:55.9px;top:399.72px;width:8px;height:5.5px;background:#d8d8d8"></div>
<div class="a" style="left:55.9px;top:405.22px;width:8px;height:5px;background:#d8d8d8"></div>
<div class="a" style="left:63.9px;top:399.72px;width:8px;height:5.5px;background:#c4c4c4"></div>
<div class="a" style="left:63.9px;top:405.22px;width:8px;height:5px;background:#cecece"></div>
<div class="a" style="left:71.9px;top:399.72px;width:8px;height:5.5px;background:#c4c4c4"></div>
<div class="a" style="left:71.9px;top:405.22px;width:8px;height:5px;background:#c4c4c4"></div>
<div class="a" style="left:79.9px;top:399.72px;width:8px;height:5.5px;background:#d0d0d0"></div>
<div class="a" style="left:79.9px;top:405.22px;width:8px;height:5px;background:#e4e4e4"></div>
<div class="a" style="left:87.9px;top:399.72px;width:8px;height:5.5px;background:#e8e8e8"></div>
<div class="a" style="left:87.9px;top:405.22px;width:8px;height:5px;background:#e6e6e6"></div>
<div class="a" style="left:95.9px;top:399.72px;width:8px;height:5.5px;background:#f0f0f0"></div>
<div class="a" style="left:95.9px;top:405.22px;width:8px;height:5px;background:#e6e6e6"></div>
<div class="a" style="left:103.9px;top:399.72px;width:8px;height:5.5px;background:#e2e2e2"></div>
<div class="a" style="left:103.9px;top:405.22px;width:8px;height:5px;background:#e6e6e6"></div>
<div class="a" style="left:111.9px;top:399.72px;width:8px;height:5.5px;background:#e2e2e2"></div>
<div class="a" style="left:111.9px;top:405.22px;width:8px;height:5px;background:#e6e6e6"></div>
<div class="a" style="left:119.9px;top:399.72px;width:8px;height:5.5px;background:#d4d4d4"></div>
<div class="a" style="left:119.9px;top:405.22px;width:8px;height:5px;background:#dedede"></div>
<div class="a" style="left:127.9px;top:399.72px;width:8px;height:5.5px;background:#d8d8d8"></div>
<div class="a" style="left:127.9px;top:405.22px;width:8px;height:5px;background:#e6e6e6"></div>
<div class="a" style="left:135.9px;top:399.72px;width:8px;height:5.5px;background:#dcdcdc"></div>
<div class="a" style="left:135.9px;top:405.22px;width:8px;height:5px;background:#e6e6e6"></div>
<div class="a" style="left:183.7px;top:399.72px;width:8px;height:5.5px;background:#c4c4c4"></div>
<div class="a" style="left:183.7px;top:405.22px;width:8px;height:5px;background:#d8d8d8"></div>
<div class="a" style="left:191.7px;top:399.72px;width:8px;height:5.5px;background:#c4c4c4"></div>
<div class="a" style="left:191.7px;top:405.22px;width:8px;height:5px;background:#cecece"></div>
<div class="a" style="left:199.7px;top:399.72px;width:8px;height:5.5px;background:#d4d4d4"></div>
<div class="a" style="left:199.7px;top:405.22px;width:8px;height:5px;background:#d4d4d4"></div>
<div class="a" style="left:207.7px;top:399.72px;width:8px;height:5.5px;background:#d0d0d0"></div>
<div class="a" style="left:207.7px;top:405.22px;width:8px;height:5px;background:#d0d0d0"></div>
<div class="a" style="left:215.7px;top:399.72px;width:8px;height:5.5px;background:#dcdcdc"></div>
<div class="a" style="left:215.7px;top:405.22px;width:8px;height:5px;background:#dcdcdc"></div>
<div class="a" style="left:223.7px;top:399.72px;width:8px;height:5.5px;background:#e2e2e2"></div>
<div class="a" style="left:223.7px;top:405.22px;width:8px;height:5px;background:#e6e6e6"></div>
<div class="a" style="left:4px;top:414.77px;width:1074.8px;height:17.45px;background:#e8e8e8;"></div>
<div class="a" style="left:20.2px;top:414.37px;width:1px;height:18.65px;background:#f6f6f6"></div>
<div class="a" style="left:45.8px;top:414.37px;width:1px;height:18.65px;background:#f6f6f6"></div>
<div class="a" style="left:90.8px;top:414.37px;width:1px;height:18.65px;background:#f6f6f6"></div>
<div class="a" style="left:151.7px;top:414.37px;width:1px;height:18.65px;background:#f6f6f6"></div>
<div class="a" style="left:261.5px;top:414.37px;width:1px;height:18.65px;background:#f6f6f6"></div>
<div class="a" style="left:325.3px;top:414.37px;width:1px;height:18.65px;background:#f6f6f6"></div>
<div class="a" style="left:368.5px;top:414.37px;width:1px;height:18.65px;background:#f6f6f6"></div>
<div class="a" style="left:432.3px;top:414.37px;width:1px;height:18.65px;background:#f6f6f6"></div>
<div class="a" style="left:496.0px;top:414.37px;width:1px;height:18.65px;background:#f6f6f6"></div>
<div class="a" style="left:555.0px;top:414.37px;width:1px;height:18.65px;background:#f6f6f6"></div>
<div class="a" style="left:613.5px;top:414.37px;width:1px;height:18.65px;background:#f6f6f6"></div>
<div class="a" style="left:732.3px;top:414.37px;width:1px;height:18.65px;background:#f6f6f6"></div>
<div class="a" style="left:794.1px;top:414.37px;width:1px;height:18.65px;background:#f6f6f6"></div>
<div class="a" style="left:857.3px;top:414.37px;width:1px;height:18.65px;background:#f6f6f6"></div>
<div class="a" style="left:910.1px;top:414.37px;width:1px;height:18.65px;background:#f6f6f6"></div>
<div class="a" style="left:962.8px;top:414.37px;width:1px;height:18.65px;background:#f6f6f6"></div>
<div class="a" style="left:1017.0px;top:414.37px;width:1px;height:18.65px;background:#f6f6f6"></div>
<div class="a cb" style="left:8.2px;top:419.37px"></div>
<div class="a td" style="left:20.7px;top:417.67px;width:25.6px">143</div>
<div class="a td" style="left:262.0px;top:417.67px;width:63.8px">Praew</div>
<div class="a td" style="left:325.8px;top:417.67px;width:43.2px">NORMAL</div>
<div class="a td" style="left:369.0px;top:417.67px;width:63.8px">136</div>
<div class="a td" style="left:432.8px;top:417.67px;width:63.7px">34</div>
<div class="a td" style="left:496.5px;top:417.67px;width:59.0px">11</div>
<div class="a td" style="left:555.5px;top:417.67px;width:58.5px">1</div>
<div class="a td" style="left:614.0px;top:417.67px;width:118.8px">2020-01-10 18:04:44</div>
<div class="a td" style="left:732.8px;top:417.67px;width:61.8px">3000</div>
<div class="a td" style="left:794.6px;top:417.67px;width:63.2px">2906</div>
<div class="a td" style="left:857.8px;top:417.67px;width:52.8px">2901</div>
<div class="a td" style="left:910.6px;top:417.67px;width:52.7px">2</div>
<div class="a td" style="left:963.3px;top:417.67px;width:54.2px">2</div>
<div class="a td" style="left:1017.5px;top:417.67px;width:61.3px">1</div>
<div class="a" style="left:47.9px;top:418.37px;width:8px;height:5.5px;background:#c8c8c8"></div>
<div class="a" style="left:47.9px;top:423.87px;width:8px;height:5px;background:#d2d2d2"></div>
<div class="a" style="left:55.9px;top:418.37px;width:8px;height:5.5px;background:#acacac"></div>
<div class="a" style="left:55.9px;top:423.87px;width:8px;height:5px;background:#c0c0c0"></div>
<div class="a" style="left:63.9px;top:418.37px;width:8px;height:5.5px;background:#c8c8c8"></div>
<div class="a" style="left:63.9px;top:423.87px;width:8px;height:5px;background:#c8c8c8"></div>
<div class="a" style="left:71.9px;top:418.37px;width:8px;height:5.5px;background:#bababa"></div>
<div class="a" style="left:71.9px;top:423.87px;width:8px;height:5px;background:#bababa"></div>
<div class="a" style="left:79.9px;top:418.37px;width:8px;height:5.5px;background:#b6b6b6"></div>
<div class="a" style="left:79.9px;top:423.87px;width:8px;height:5px;background:#d4d4d4"></div>
<div class="a" style="left:87.9px;top:418.37px;width:8px;height:5.5px;background:#e0e0e0"></div>
<div class="a" style="left:87.9px;top:423.87px;width:8px;height:5px;background:#e6e6e6"></div>
<div class="a" style="left:95.9px;top:418.37px;width:8px;height:5.5px;background:#d8d8d8"></div>
<div class="a" style="left:95.9px;top:423.87px;width:8px;height:5px;background:#e2e2e2"></div>
<div class="a" style="left:103.9px;top:418.37px;width:8px;height:5.5px;background:#acacac"></div>
<div class="a" style="left:103.9px;top:423.87px;width:8px;height:5px;background:#b6b6b6"></div>
<div class="a" style="left:111.9px;top:418.37px;width:8px;height:5.5px;background:#b6b6b6"></div>
<div class="a" style="left:111.9px;top:423.87px;width:8px;height:5px;background:#b6b6b6"></div>
<div class="a" style="left:119.9px;top:418.37px;width:8px;height:5.5px;background:#b2b2b2"></div>
<div class="a" style="left:119.9px;top:423.87px;width:8px;height:5px;background:#bcbcbc"></div>
<div class="a" style="left:127.9px;top:418.37px;width:8px;height:5.5px;background:#b6b6b6"></div>
<div class="a" style="left:127.9px;top:423.87px;width:8px;height:5px;background:#cacaca"></div>
<div class="a" style="left:135.9px;top:418.37px;width:8px;height:5.5px;background:#bebebe"></div>
<div class="a" style="left:135.9px;top:423.87px;width:8px;height:5px;background:#c8c8c8"></div>
<div class="a" style="left:183.7px;top:418.37px;width:8px;height:5.5px;background:#b6b6b6"></div>
<div class="a" style="left:183.7px;top:423.87px;width:8px;height:5px;background:#d4d4d4"></div>
<div class="a" style="left:191.7px;top:418.37px;width:8px;height:5.5px;background:#bebebe"></div>
<div class="a" style="left:191.7px;top:423.87px;width:8px;height:5px;background:#c8c8c8"></div>
<div class="a" style="left:199.7px;top:418.37px;width:8px;height:5.5px;background:#b6b6b6"></div>
<div class="a" style="left:199.7px;top:423.87px;width:8px;height:5px;background:#cacaca"></div>
<div class="a" style="left:207.7px;top:418.37px;width:8px;height:5.5px;background:#c8c8c8"></div>
<div class="a" style="left:207.7px;top:423.87px;width:8px;height:5px;background:#c8c8c8"></div>
<div class="a" style="left:215.7px;top:418.37px;width:8px;height:5.5px;background:#b6b6b6"></div>
<div class="a" style="left:215.7px;top:423.87px;width:8px;height:5px;background:#b6b6b6"></div>
<div class="a" style="left:223.7px;top:418.37px;width:8px;height:5.5px;background:#acacac"></div>
<div class="a" style="left:223.7px;top:423.87px;width:8px;height:5px;background:#acacac"></div>
<div class="a" style="left:4px;top:432.22px;width:1074.8px;height:19.85px;background:#faf9f9;box-shadow:inset 0 1px #fff,inset 0 -1px #fff"></div>
<div class="a" style="left:20.2px;top:433.02px;width:1px;height:18.65px;background:#f6f6f6"></div>
<div class="a" style="left:45.8px;top:433.02px;width:1px;height:18.65px;background:#f6f6f6"></div>
<div class="a" style="left:90.8px;top:433.02px;width:1px;height:18.65px;background:#f6f6f6"></div>
<div class="a" style="left:151.7px;top:433.02px;width:1px;height:18.65px;background:#f6f6f6"></div>
<div class="a" style="left:261.5px;top:433.02px;width:1px;height:18.65px;background:#f6f6f6"></div>
<div class="a" style="left:325.3px;top:433.02px;width:1px;height:18.65px;background:#f6f6f6"></div>
<div class="a" style="left:368.5px;top:433.02px;width:1px;height:18.65px;background:#f6f6f6"></div>
<div class="a" style="left:432.3px;top:433.02px;width:1px;height:18.65px;background:#f6f6f6"></div>
<div class="a" style="left:496.0px;top:433.02px;width:1px;height:18.65px;background:#f6f6f6"></div>
<div class="a" style="left:555.0px;top:433.02px;width:1px;height:18.65px;background:#f6f6f6"></div>
<div class="a" style="left:613.5px;top:433.02px;width:1px;height:18.65px;background:#f6f6f6"></div>
<div class="a" style="left:732.3px;top:433.02px;width:1px;height:18.65px;background:#f6f6f6"></div>
<div class="a" style="left:794.1px;top:433.02px;width:1px;height:18.65px;background:#f6f6f6"></div>
<div class="a" style="left:857.3px;top:433.02px;width:1px;height:18.65px;background:#f6f6f6"></div>
<div class="a" style="left:910.1px;top:433.02px;width:1px;height:18.65px;background:#f6f6f6"></div>
<div class="a" style="left:962.8px;top:433.02px;width:1px;height:18.65px;background:#f6f6f6"></div>
<div class="a" style="left:1017.0px;top:433.02px;width:1px;height:18.65px;background:#f6f6f6"></div>
<div class="a cb" style="left:8.2px;top:438.02px"></div>
<div class="a td" style="left:20.7px;top:436.32px;width:25.6px">93</div>
<div class="a td" style="left:262.0px;top:436.32px;width:63.8px">Praew</div>
<div class="a td" style="left:325.8px;top:436.32px;width:43.2px">NORMAL</div>
<div class="a td" style="left:369.0px;top:436.32px;width:63.8px">188</div>
<div class="a td" style="left:432.8px;top:436.32px;width:63.7px">33</div>
<div class="a td" style="left:496.5px;top:436.32px;width:59.0px">9</div>
<div class="a td" style="left:555.5px;top:436.32px;width:58.5px">0</div>
<div class="a td" style="left:614.0px;top:436.32px;width:118.8px">2020-01-11 00:39:31</div>
<div class="a td" style="left:732.8px;top:436.32px;width:61.8px">5000</div>
<div class="a td" style="left:794.6px;top:436.32px;width:63.2px">2956</div>
<div class="a td" style="left:857.8px;top:436.32px;width:52.8px">2739</div>
<div class="a td" style="left:910.6px;top:436.32px;width:52.7px">8</div>
<div class="a td" style="left:963.3px;top:436.32px;width:54.2px">3</div>
<div class="a td" style="left:1017.5px;top:436.32px;width:61.3px">209</div>
<div class="a" style="left:63.9px;top:438.52px;width:8px;height:8px;background:#d8d8d8"></div>
<div class="a" style="left:71.9px;top:438.52px;width:8px;height:8px;background:#cacaca"></div>
<div class="a" style="left:79.9px;top:438.52px;width:8px;height:8px;background:#d8d8d8"></div>
<div class="a" style="left:87.9px;top:438.52px;width:8px;height:8px;background:#f4f4f4"></div>
<div class="a" style="left:95.9px;top:438.52px;width:8px;height:8px;background:#ececec"></div>
<div class="a" style="left:103.9px;top:438.52px;width:8px;height:8px;background:#d4d4d4"></div>
<div class="a" style="left:111.9px;top:438.52px;width:8px;height:8px;background:#c4c4c4"></div>
<div class="a" style="left:119.9px;top:438.52px;width:8px;height:8px;background:#dcdcdc"></div>
<div class="a" style="left:127.9px;top:438.52px;width:8px;height:8px;background:#e2e2e2"></div>
<div class="a" style="left:135.9px;top:438.52px;width:8px;height:8px;background:#dcdcdc"></div>
<div class="a" style="left:183.7px;top:438.52px;width:8px;height:8px;background:#d4d4d4"></div>
<div class="a" style="left:191.7px;top:438.52px;width:8px;height:8px;background:#dcdcdc"></div>
<div class="a" style="left:199.7px;top:438.52px;width:8px;height:8px;background:#d4d4d4"></div>
<div class="a" style="left:207.7px;top:438.52px;width:8px;height:8px;background:#d8d8d8"></div>
<div class="a" style="left:215.7px;top:438.52px;width:8px;height:8px;background:#e2e2e2"></div>
<div class="a" style="left:223.7px;top:438.52px;width:8px;height:8px;background:#d4d4d4"></div>
<div class="a" style="left:4px;top:452.07px;width:1074.8px;height:17.45px;background:#e8e8e8;"></div>
<div class="a" style="left:20.2px;top:451.67px;width:1px;height:18.65px;background:#f6f6f6"></div>
<div class="a" style="left:45.8px;top:451.67px;width:1px;height:18.65px;background:#f6f6f6"></div>
<div class="a" style="left:90.8px;top:451.67px;width:1px;height:18.65px;background:#f6f6f6"></div>
<div class="a" style="left:151.7px;top:451.67px;width:1px;height:18.65px;background:#f6f6f6"></div>
<div class="a" style="left:261.5px;top:451.67px;width:1px;height:18.65px;background:#f6f6f6"></div>
<div class="a" style="left:325.3px;top:451.67px;width:1px;height:18.65px;background:#f6f6f6"></div>
<div class="a" style="left:368.5px;top:451.67px;width:1px;height:18.65px;background:#f6f6f6"></div>
<div class="a" style="left:432.3px;top:451.67px;width:1px;height:18.65px;background:#f6f6f6"></div>
<div class="a" style="left:496.0px;top:451.67px;width:1px;height:18.65px;background:#f6f6f6"></div>
<div class="a" style="left:555.0px;top:451.67px;width:1px;height:18.65px;background:#f6f6f6"></div>
<div class="a" style="left:613.5px;top:451.67px;width:1px;height:18.65px;background:#f6f6f6"></div>
<div class="a" style="left:732.3px;top:451.67px;width:1px;height:18.65px;background:#f6f6f6"></div>
<div class="a" style="left:794.1px;top:451.67px;width:1px;height:18.65px;background:#f6f6f6"></div>
<div class="a" style="left:857.3px;top:451.67px;width:1px;height:18.65px;background:#f6f6f6"></div>
<div class="a" style="left:910.1px;top:451.67px;width:1px;height:18.65px;background:#f6f6f6"></div>
<div class="a" style="left:962.8px;top:451.67px;width:1px;height:18.65px;background:#f6f6f6"></div>
<div class="a" style="left:1017.0px;top:451.67px;width:1px;height:18.65px;background:#f6f6f6"></div>
<div class="a cb" style="left:8.2px;top:456.67px"></div>
<div class="a td" style="left:20.7px;top:454.97px;width:25.6px">121</div>
<div class="a td" style="left:262.0px;top:454.97px;width:63.8px">Praew</div>
<div class="a td" style="left:325.8px;top:454.97px;width:43.2px">NORMAL</div>
<div class="a td" style="left:369.0px;top:454.97px;width:63.8px">132</div>
<div class="a td" style="left:432.8px;top:454.97px;width:63.7px">33</div>
<div class="a td" style="left:496.5px;top:454.97px;width:59.0px">11</div>
<div class="a td" style="left:555.5px;top:454.97px;width:58.5px">2</div>
<div class="a td" style="left:614.0px;top:454.97px;width:118.8px">2020-01-10 22:18:05</div>
<div class="a td" style="left:732.8px;top:454.97px;width:61.8px">5000</div>
<div class="a td" style="left:794.6px;top:454.97px;width:63.2px">2458</div>
<div class="a td" style="left:857.8px;top:454.97px;width:52.8px">2458</div>
<div class="a td" style="left:910.6px;top:454.97px;width:52.7px">0</div>
<div class="a td" style="left:963.3px;top:454.97px;width:54.2px">0</div>
<div class="a td" style="left:1017.5px;top:454.97px;width:61.3px">0</div>
<div class="a" style="left:47.9px;top:457.17px;width:8px;height:8px;background:#b6b6b6"></div>
<div class="a" style="left:55.9px;top:457.17px;width:8px;height:8px;background:#c2c2c2"></div>
<div class="a" style="left:63.9px;top:457.17px;width:8px;height:8px;background:#b2b2b2"></div>
<div class="a" style="left:71.9px;top:457.17px;width:8px;height:8px;background:#b2b2b2"></div>
<div class="a" style="left:79.9px;top:457.17px;width:8px;height:8px;background:#b6b6b6"></div>
<div class="a" style="left:87.9px;top:457.17px;width:8px;height:8px;background:#dcdcdc"></div>
<div class="a" style="left:95.9px;top:457.17px;width:8px;height:8px;background:#dcdcdc"></div>
<div class="a" style="left:103.9px;top:457.17px;width:8px;height:8px;background:#bababa"></div>
<div class="a" style="left:111.9px;top:457.17px;width:8px;height:8px;background:#b6b6b6"></div>
<div class="a" style="left:119.9px;top:457.17px;width:8px;height:8px;background:#acacac"></div>
<div class="a" style="left:127.9px;top:457.17px;width:8px;height:8px;background:#c8c8c8"></div>
<div class="a" style="left:135.9px;top:457.17px;width:8px;height:8px;background:#b2b2b2"></div>
<div class="a" style="left:183.7px;top:457.17px;width:8px;height:8px;background:#acacac"></div>
<div class="a" style="left:191.7px;top:457.17px;width:8px;height:8px;background:#acacac"></div>
<div class="a" style="left:199.7px;top:457.17px;width:8px;height:8px;background:#c2c2c2"></div>
<div class="a" style="left:4px;top:469.52px;width:1074.8px;height:19.85px;background:#faf9f9;box-shadow:inset 0 1px #fff,inset 0 -1px #fff"></div>
<div class="a" style="left:20.2px;top:470.32px;width:1px;height:18.65px;background:#f6f6f6"></div>
<div class="a" style="left:45.8px;top:470.32px;width:1px;height:18.65px;background:#f6f6f6"></div>
<div class="a" style="left:90.8px;top:470.32px;width:1px;height:18.65px;background:#f6f6f6"></div>
<div class="a" style="left:151.7px;top:470.32px;width:1px;height:18.65px;background:#f6f6f6"></div>
<div class="a" style="left:261.5px;top:470.32px;width:1px;height:18.65px;background:#f6f6f6"></div>
<div class="a" style="left:325.3px;top:470.32px;width:1px;height:18.65px;background:#f6f6f6"></div>
<div class="a" style="left:368.5px;top:470.32px;width:1px;height:18.65px;background:#f6f6f6"></div>
<div class="a" style="left:432.3px;top:470.32px;width:1px;height:18.65px;background:#f6f6f6"></div>
<div class="a" style="left:496.0px;top:470.32px;width:1px;height:18.65px;background:#f6f6f6"></div>
<div class="a" style="left:555.0px;top:470.32px;width:1px;height:18.65px;background:#f6f6f6"></div>
<div class="a" style="left:613.5px;top:470.32px;width:1px;height:18.65px;background:#f6f6f6"></div>
<div class="a" style="left:732.3px;top:470.32px;width:1px;height:18.65px;background:#f6f6f6"></div>
<div class="a" style="left:794.1px;top:470.32px;width:1px;height:18.65px;background:#f6f6f6"></div>
<div class="a" style="left:857.3px;top:470.32px;width:1px;height:18.65px;background:#f6f6f6"></div>
<div class="a" style="left:910.1px;top:470.32px;width:1px;height:18.65px;background:#f6f6f6"></div>
<div class="a" style="left:962.8px;top:470.32px;width:1px;height:18.65px;background:#f6f6f6"></div>
<div class="a" style="left:1017.0px;top:470.32px;width:1px;height:18.65px;background:#f6f6f6"></div>
<div class="a cb" style="left:8.2px;top:475.32px"></div>
<div class="a td" style="left:20.7px;top:473.62px;width:25.6px">106</div>
<div class="a td" style="left:262.0px;top:473.62px;width:63.8px">Praew</div>
<div class="a td" style="left:325.8px;top:473.62px;width:43.2px">NORMAL</div>
<div class="a td" style="left:369.0px;top:473.62px;width:63.8px">105</div>
<div class="a td" style="left:432.8px;top:473.62px;width:63.7px">33</div>
<div class="a td" style="left:496.5px;top:473.62px;width:59.0px">11</div>
<div class="a td" style="left:555.5px;top:473.62px;width:58.5px">1</div>
<div class="a td" style="left:614.0px;top:473.62px;width:118.8px">2020-01-10 00:28:32</div>
<div class="a td" style="left:732.8px;top:473.62px;width:61.8px">3000</div>
<div class="a td" style="left:794.6px;top:473.62px;width:63.2px">2395</div>
<div class="a td" style="left:857.8px;top:473.62px;width:52.8px">2355</div>
<div class="a td" style="left:910.6px;top:473.62px;width:52.7px">1</div>
<div class="a td" style="left:963.3px;top:473.62px;width:54.2px">39</div>
<div class="a td" style="left:1017.5px;top:473.62px;width:61.3px">0</div>
<div class="a" style="left:47.9px;top:475.82px;width:8px;height:8px;background:#d0d0d0"></div>
<div class="a" style="left:55.9px;top:475.82px;width:8px;height:8px;background:#d4d4d4"></div>
<div class="a" style="left:63.9px;top:475.82px;width:8px;height:8px;background:#cacaca"></div>
<div class="a" style="left:71.9px;top:475.82px;width:8px;height:8px;background:#c4c4c4"></div>
<div class="a" style="left:79.9px;top:475.82px;width:8px;height:8px;background:#c4c4c4"></div>
<div class="a" style="left:87.9px;top:475.82px;width:8px;height:8px;background:#f4f4f4"></div>
<div class="a" style="left:95.9px;top:475.82px;width:8px;height:8px;background:#f0f0f0"></div>
<div class="a" style="left:103.9px;top:475.82px;width:8px;height:8px;background:#d8d8d8"></div>
<div class="a" style="left:111.9px;top:475.82px;width:8px;height:8px;background:#cacaca"></div>
<div class="a" style="left:119.9px;top:475.82px;width:8px;height:8px;background:#dcdcdc"></div>
<div class="a" style="left:127.9px;top:475.82px;width:8px;height:8px;background:#d0d0d0"></div>
<div class="a" style="left:135.9px;top:475.82px;width:8px;height:8px;background:#c4c4c4"></div>
<div class="a" style="left:183.7px;top:475.82px;width:8px;height:8px;background:#d4d4d4"></div>
<div class="a" style="left:191.7px;top:475.82px;width:8px;height:8px;background:#cacaca"></div>
<div class="a" style="left:199.7px;top:475.82px;width:8px;height:8px;background:#cacaca"></div>
<div class="a" style="left:207.7px;top:475.82px;width:8px;height:8px;background:#d0d0d0"></div>
<div class="a" style="left:4px;top:489.36px;width:1074.8px;height:17.45px;background:#e8e8e8;"></div>
<div class="a" style="left:20.2px;top:488.96px;width:1px;height:18.65px;background:#f6f6f6"></div>
<div class="a" style="left:45.8px;top:488.96px;width:1px;height:18.65px;background:#f6f6f6"></div>
<div class="a" style="left:90.8px;top:488.96px;width:1px;height:18.65px;background:#f6f6f6"></div>
<div class="a" style="left:151.7px;top:488.96px;width:1px;height:18.65px;background:#f6f6f6"></div>
<div class="a" style="left:261.5px;top:488.96px;width:1px;height:18.65px;background:#f6f6f6"></div>
<div class="a" style="left:325.3px;top:488.96px;width:1px;height:18.65px;background:#f6f6f6"></div>
<div class="a" style="left:368.5px;top:488.96px;width:1px;height:18.65px;background:#f6f6f6"></div>
<div class="a" style="left:432.3px;top:488.96px;width:1px;height:18.65px;background:#f6f6f6"></div>
<div class="a" style="left:496.0px;top:488.96px;width:1px;height:18.65px;background:#f6f6f6"></div>
<div class="a" style="left:555.0px;top:488.96px;width:1px;height:18.65px;background:#f6f6f6"></div>
<div class="a" style="left:613.5px;top:488.96px;width:1px;height:18.65px;background:#f6f6f6"></div>
<div class="a" style="left:732.3px;top:488.96px;width:1px;height:18.65px;background:#f6f6f6"></div>
<div class="a" style="left:794.1px;top:488.96px;width:1px;height:18.65px;background:#f6f6f6"></div>
<div class="a" style="left:857.3px;top:488.96px;width:1px;height:18.65px;background:#f6f6f6"></div>
<div class="a" style="left:910.1px;top:488.96px;width:1px;height:18.65px;background:#f6f6f6"></div>
<div class="a" style="left:962.8px;top:488.96px;width:1px;height:18.65px;background:#f6f6f6"></div>
<div class="a" style="left:1017.0px;top:488.96px;width:1px;height:18.65px;background:#f6f6f6"></div>
<div class="a cb" style="left:8.2px;top:493.96px"></div>
<div class="a td" style="left:20.7px;top:492.26px;width:25.6px">655</div>
<div class="a td" style="left:262.0px;top:492.26px;width:63.8px">B2-CODCB</div>
<div class="a td" style="left:325.8px;top:492.26px;width:43.2px">NORMAL</div>
<div class="a td" style="left:369.0px;top:492.26px;width:63.8px">63</div>
<div class="a td" style="left:432.8px;top:492.26px;width:63.7px">33</div>
<div class="a td" style="left:496.5px;top:492.26px;width:59.0px">5</div>
<div class="a td" style="left:555.5px;top:492.26px;width:58.5px">0</div>
<div class="a td" style="left:614.0px;top:492.26px;width:118.8px">2020-01-08 18:26:24</div>
<div class="a td" style="left:732.8px;top:492.26px;width:61.8px">500</div>
<div class="a td" style="left:794.6px;top:492.26px;width:63.2px">411</div>
<div class="a td" style="left:857.8px;top:492.26px;width:52.8px">392</div>
<div class="a td" style="left:910.6px;top:492.26px;width:52.7px">0</div>
<div class="a td" style="left:963.3px;top:492.26px;width:54.2px">19</div>
<div class="a td" style="left:1017.5px;top:492.26px;width:61.3px">0</div>
<div class="a" style="left:47.9px;top:492.96px;width:8px;height:5.5px;background:#b6b6b6"></div>
<div class="a" style="left:47.9px;top:498.46px;width:8px;height:5px;background:#cacaca"></div>
<div class="a" style="left:55.9px;top:492.96px;width:8px;height:5.5px;background:#b6b6b6"></div>
<div class="a" style="left:55.9px;top:498.46px;width:8px;height:5px;background:#cacaca"></div>
<div class="a" style="left:63.9px;top:492.96px;width:8px;height:5.5px;background:#b2b2b2"></div>
<div class="a" style="left:63.9px;top:498.46px;width:8px;height:5px;background:#b2b2b2"></div>
<div class="a" style="left:71.9px;top:492.96px;width:8px;height:5.5px;background:#b6b6b6"></div>
<div class="a" style="left:71.9px;top:498.46px;width:8px;height:5px;background:#c0c0c0"></div>
<div class="a" style="left:79.9px;top:492.96px;width:8px;height:5.5px;background:#b6b6b6"></div>
<div class="a" style="left:79.9px;top:498.46px;width:8px;height:5px;background:#c0c0c0"></div>
<div class="a" style="left:87.9px;top:492.96px;width:8px;height:5.5px;background:#d8d8d8"></div>
<div class="a" style="left:87.9px;top:498.46px;width:8px;height:5px;background:#e6e6e6"></div>
<div class="a" style="left:95.9px;top:492.96px;width:8px;height:5.5px;background:#e4e4e4"></div>
<div class="a" style="left:95.9px;top:498.46px;width:8px;height:5px;background:#e4e4e4"></div>
<div class="a" style="left:103.9px;top:492.96px;width:8px;height:5.5px;background:#bababa"></div>
<div class="a" style="left:103.9px;top:498.46px;width:8px;height:5px;background:#cecece"></div>
<div class="a" style="left:111.9px;top:492.96px;width:8px;height:5.5px;background:#bebebe"></div>
<div class="a" style="left:111.9px;top:498.46px;width:8px;height:5px;background:#c8c8c8"></div>
<div class="a" style="left:119.9px;top:492.96px;width:8px;height:5.5px;background:#b2b2b2"></div>
<div class="a" style="left:119.9px;top:498.46px;width:8px;height:5px;background:#b2b2b2"></div>
<div class="a" style="left:127.9px;top:492.96px;width:8px;height:5.5px;background:#acacac"></div>
<div class="a" style="left:127.9px;top:498.46px;width:8px;height:5px;background:#c0c0c0"></div>
<div class="a" style="left:135.9px;top:492.96px;width:8px;height:5.5px;background:#c8c8c8"></div>
<div class="a" style="left:135.9px;top:498.46px;width:8px;height:5px;background:#c8c8c8"></div>
<div class="a" style="left:183.7px;top:492.96px;width:8px;height:5.5px;background:#b2b2b2"></div>
<div class="a" style="left:183.7px;top:498.46px;width:8px;height:5px;background:#d0d0d0"></div>
<div class="a" style="left:191.7px;top:492.96px;width:8px;height:5.5px;background:#bebebe"></div>
<div class="a" style="left:191.7px;top:498.46px;width:8px;height:5px;background:#bebebe"></div>
<div class="a" style="left:199.7px;top:492.96px;width:8px;height:5.5px;background:#bababa"></div>
<div class="a" style="left:199.7px;top:498.46px;width:8px;height:5px;background:#bababa"></div>
<div class="a" style="left:207.7px;top:492.96px;width:8px;height:5.5px;background:#b6b6b6"></div>
<div class="a" style="left:207.7px;top:498.46px;width:8px;height:5px;background:#cacaca"></div>
<div class="a" style="left:215.7px;top:492.96px;width:8px;height:5.5px;background:#c2c2c2"></div>
<div class="a" style="left:215.7px;top:498.46px;width:8px;height:5px;background:#cccccc"></div>
<div class="a" style="left:4px;top:506.81px;width:1074.8px;height:19.85px;background:#d9d9d9;box-shadow:inset 0 1px #fff,inset 0 -1px #fff"></div>
<div class="a" style="left:20.2px;top:507.61px;width:1px;height:18.65px;background:#f6f6f6"></div>
<div class="a" style="left:45.8px;top:507.61px;width:1px;height:18.65px;background:#f6f6f6"></div>
<div class="a" style="left:90.8px;top:507.61px;width:1px;height:18.65px;background:#f6f6f6"></div>
<div class="a" style="left:151.7px;top:507.61px;width:1px;height:18.65px;background:#f6f6f6"></div>
<div class="a" style="left:261.5px;top:507.61px;width:1px;height:18.65px;background:#f6f6f6"></div>
<div class="a" style="left:325.3px;top:507.61px;width:1px;height:18.65px;background:#f6f6f6"></div>
<div class="a" style="left:368.5px;top:507.61px;width:1px;height:18.65px;background:#f6f6f6"></div>
<div class="a" style="left:432.3px;top:507.61px;width:1px;height:18.65px;background:#f6f6f6"></div>
<div class="a" style="left:496.0px;top:507.61px;width:1px;height:18.65px;background:#f6f6f6"></div>
<div class="a" style="left:555.0px;top:507.61px;width:1px;height:18.65px;background:#f6f6f6"></div>
<div class="a" style="left:613.5px;top:507.61px;width:1px;height:18.65px;background:#f6f6f6"></div>
<div class="a" style="left:732.3px;top:507.61px;width:1px;height:18.65px;background:#f6f6f6"></div>
<div class="a" style="left:794.1px;top:507.61px;width:1px;height:18.65px;background:#f6f6f6"></div>
<div class="a" style="left:857.3px;top:507.61px;width:1px;height:18.65px;background:#f6f6f6"></div>
<div class="a" style="left:910.1px;top:507.61px;width:1px;height:18.65px;background:#f6f6f6"></div>
<div class="a" style="left:962.8px;top:507.61px;width:1px;height:18.65px;background:#f6f6f6"></div>
<div class="a" style="left:1017.0px;top:507.61px;width:1px;height:18.65px;background:#f6f6f6"></div>
<div class="a cb" style="left:8.2px;top:512.61px"></div>
<div class="a td" style="left:20.7px;top:510.91px;width:25.6px">826</div>
<div class="a td" style="left:262.0px;top:510.91px;width:63.8px">Praew-2sts</div>
<div class="a td" style="left:325.8px;top:510.91px;width:43.2px">NORMAL</div>
<div class="a td" style="left:369.0px;top:510.91px;width:63.8px">54</div>
<div class="a td" style="left:432.8px;top:510.91px;width:63.7px">32</div>
<div class="a td" style="left:496.5px;top:510.91px;width:59.0px">15</div>
<div class="a td" style="left:555.5px;top:510.91px;width:58.5px">2</div>
<div class="a td" style="left:614.0px;top:510.91px;width:118.8px">2020-01-10 16:10:42</div>
<div class="a td" style="left:732.8px;top:510.91px;width:61.8px">3000</div>
<div class="a td" style="left:794.6px;top:510.91px;width:63.2px">983</div>
<div class="a td" style="left:857.8px;top:510.91px;width:52.8px">920</div>
<div class="a td" style="left:910.6px;top:510.91px;width:52.7px">1</div>
<div class="a td" style="left:963.3px;top:510.91px;width:54.2px">62</div>
<div class="a td" style="left:1017.5px;top:510.91px;width:61.3px">0</div>
<div class="a" style="left:47.9px;top:511.61px;width:8px;height:5.5px;background:#d8d8d8"></div>
<div class="a" style="left:47.9px;top:517.11px;width:8px;height:5px;background:#e2e2e2"></div>
<div class="a" style="left:55.9px;top:511.61px;width:8px;height:5.5px;background:#dcdcdc"></div>
<div class="a" style="left:55.9px;top:517.11px;width:8px;height:5px;background:#e6e6e6"></div>
<div class="a" style="left:63.9px;top:511.61px;width:8px;height:5.5px;background:#e2e2e2"></div>
<div class="a" style="left:63.9px;top:517.11px;width:8px;height:5px;background:#e6e6e6"></div>
<div class="a" style="left:71.9px;top:511.61px;width:8px;height:5.5px;background:#dcdcdc"></div>
<div class="a" style="left:71.9px;top:517.11px;width:8px;height:5px;background:#e6e6e6"></div>
<div class="a" style="left:79.9px;top:511.61px;width:8px;height:5.5px;background:#cacaca"></div>
<div class="a" style="left:79.9px;top:517.11px;width:8px;height:5px;background:#dedede"></div>
<div class="a" style="left:87.9px;top:511.61px;width:8px;height:5.5px;background:#ececec"></div>
<div class="a" style="left:87.9px;top:517.11px;width:8px;height:5px;background:#e6e6e6"></div>
<div class="a" style="left:95.9px;top:511.61px;width:8px;height:5.5px;background:#f4f4f4"></div>
<div class="a" style="left:95.9px;top:517.11px;width:8px;height:5px;background:#e6e6e6"></div>
<div class="a" style="left:103.9px;top:511.61px;width:8px;height:5.5px;background:#d8d8d8"></div>
<div class="a" style="left:103.9px;top:517.11px;width:8px;height:5px;background:#d8d8d8"></div>
<div class="a" style="left:111.9px;top:511.61px;width:8px;height:5.5px;background:#e2e2e2"></div>
<div class="a" style="left:111.9px;top:517.11px;width:8px;height:5px;background:#e6e6e6"></div>
<div class="a" style="left:119.9px;top:511.61px;width:8px;height:5.5px;background:#c4c4c4"></div>
<div class="a" style="left:119.9px;top:517.11px;width:8px;height:5px;background:#c4c4c4"></div>
<div class="a" style="left:127.9px;top:511.61px;width:8px;height:5.5px;background:#c4c4c4"></div>
<div class="a" style="left:127.9px;top:517.11px;width:8px;height:5px;background:#cecece"></div>
<div class="a" style="left:135.9px;top:511.61px;width:8px;height:5.5px;background:#dcdcdc"></div>
<div class="a" style="left:135.9px;top:517.11px;width:8px;height:5px;background:#e6e6e6"></div>
<div class="a" style="left:183.7px;top:511.61px;width:8px;height:5.5px;background:#c4c4c4"></div>
<div class="a" style="left:183.7px;top:517.11px;width:8px;height:5px;background:#e2e2e2"></div>
<div class="a" style="left:191.7px;top:511.61px;width:8px;height:5.5px;background:#e2e2e2"></div>
<div class="a" style="left:191.7px;top:517.11px;width:8px;height:5px;background:#e6e6e6"></div>
<div class="a" style="left:199.7px;top:511.61px;width:8px;height:5.5px;background:#d8d8d8"></div>
<div class="a" style="left:199.7px;top:517.11px;width:8px;height:5px;background:#d8d8d8"></div>
<div class="a" style="left:207.7px;top:511.61px;width:8px;height:5.5px;background:#dcdcdc"></div>
<div class="a" style="left:207.7px;top:517.11px;width:8px;height:5px;background:#dcdcdc"></div>
<div class="a" style="left:215.7px;top:511.61px;width:8px;height:5.5px;background:#dcdcdc"></div>
<div class="a" style="left:215.7px;top:517.11px;width:8px;height:5px;background:#e6e6e6"></div>
<div class="a" style="left:4px;top:526.66px;width:1074.8px;height:17.45px;background:#e8e8e8;"></div>
<div class="a" style="left:20.2px;top:526.26px;width:1px;height:18.65px;background:#f6f6f6"></div>
<div class="a" style="left:45.8px;top:526.26px;width:1px;height:18.65px;background:#f6f6f6"></div>
<div class="a" style="left:90.8px;top:526.26px;width:1px;height:18.65px;background:#f6f6f6"></div>
<div class="a" style="left:151.7px;top:526.26px;width:1px;height:18.65px;background:#f6f6f6"></div>
<div class="a" style="left:261.5px;top:526.26px;width:1px;height:18.65px;background:#f6f6f6"></div>
<div class="a" style="left:325.3px;top:526.26px;width:1px;height:18.65px;background:#f6f6f6"></div>
<div class="a" style="left:368.5px;top:526.26px;width:1px;height:18.65px;background:#f6f6f6"></div>
<div class="a" style="left:432.3px;top:526.26px;width:1px;height:18.65px;background:#f6f6f6"></div>
<div class="a" style="left:496.0px;top:526.26px;width:1px;height:18.65px;background:#f6f6f6"></div>
<div class="a" style="left:555.0px;top:526.26px;width:1px;height:18.65px;background:#f6f6f6"></div>
<div class="a" style="left:613.5px;top:526.26px;width:1px;height:18.65px;background:#f6f6f6"></div>
<div class="a" style="left:732.3px;top:526.26px;width:1px;height:18.65px;background:#f6f6f6"></div>
<div class="a" style="left:794.1px;top:526.26px;width:1px;height:18.65px;background:#f6f6f6"></div>
<div class="a" style="left:857.3px;top:526.26px;width:1px;height:18.65px;background:#f6f6f6"></div>
<div class="a" style="left:910.1px;top:526.26px;width:1px;height:18.65px;background:#f6f6f6"></div>
<div class="a" style="left:962.8px;top:526.26px;width:1px;height:18.65px;background:#f6f6f6"></div>
<div class="a" style="left:1017.0px;top:526.26px;width:1px;height:18.65px;background:#f6f6f6"></div>
<div class="a cb" style="left:8.2px;top:531.26px"></div>
<div class="a td" style="left:20.7px;top:529.56px;width:25.6px">140</div>
<div class="a td" style="left:262.0px;top:529.56px;width:63.8px">Praew</div>
<div class="a td" style="left:325.8px;top:529.56px;width:43.2px">NORMAL</div>
<div class="a td" style="left:369.0px;top:529.56px;width:63.8px">123</div>
<div class="a td" style="left:432.8px;top:529.56px;width:63.7px">32</div>
<div class="a td" style="left:496.5px;top:529.56px;width:59.0px">9</div>
<div class="a td" style="left:555.5px;top:529.56px;width:58.5px">0</div>
<div class="a td" style="left:614.0px;top:529.56px;width:118.8px">2020-01-09 23:03:51</div>
<div class="a td" style="left:732.8px;top:529.56px;width:61.8px">3000</div>
<div class="a td" style="left:794.6px;top:529.56px;width:63.2px">1661</div>
<div class="a td" style="left:857.8px;top:529.56px;width:52.8px">1630</div>
<div class="a td" style="left:910.6px;top:529.56px;width:52.7px">0</div>
<div class="a td" style="left:963.3px;top:529.56px;width:54.2px">0</div>
<div class="a td" style="left:1017.5px;top:529.56px;width:61.3px">31</div>
<div class="a" style="left:55.9px;top:531.76px;width:8px;height:8px;background:#acacac"></div>
<div class="a" style="left:63.9px;top:531.76px;width:8px;height:8px;background:#bababa"></div>
<div class="a" style="left:71.9px;top:531.76px;width:8px;height:8px;background:#c8c8c8"></div>
<div class="a" style="left:79.9px;top:531.76px;width:8px;height:8px;background:#acacac"></div>
<div class="a" style="left:87.9px;top:531.76px;width:8px;height:8px;background:#d8d8d8"></div>
<div class="a" style="left:95.9px;top:531.76px;width:8px;height:8px;background:#d8d8d8"></div>
<div class="a" style="left:103.9px;top:531.76px;width:8px;height:8px;background:#c2c2c2"></div>
<div class="a" style="left:111.9px;top:531.76px;width:8px;height:8px;background:#c2c2c2"></div>
<div class="a" style="left:119.9px;top:531.76px;width:8px;height:8px;background:#bababa"></div>
<div class="a" style="left:127.9px;top:531.76px;width:8px;height:8px;background:#b6b6b6"></div>
<div class="a" style="left:135.9px;top:531.76px;width:8px;height:8px;background:#c8c8c8"></div>
<div class="a" style="left:183.7px;top:531.76px;width:8px;height:8px;background:#acacac"></div>
<div class="a" style="left:191.7px;top:531.76px;width:8px;height:8px;background:#c8c8c8"></div>
<div class="a" style="left:199.7px;top:531.76px;width:8px;height:8px;background:#b6b6b6"></div>
<div class="a" style="left:207.7px;top:531.76px;width:8px;height:8px;background:#b2b2b2"></div>
<div class="a" style="left:215.7px;top:531.76px;width:8px;height:8px;background:#c2c2c2"></div>
<div class="a" style="left:223.7px;top:531.76px;width:8px;height:8px;background:#c8c8c8"></div>
<div class="a" style="left:4px;top:544.11px;width:1074.8px;height:19.85px;background:#faf9f9;box-shadow:inset 0 1px #fff,inset 0 -1px #fff"></div>
<div class="a" style="left:20.2px;top:544.91px;width:1px;height:18.65px;background:#f6f6f6"></div>
<div class="a" style="left:45.8px;top:544.91px;width:1px;height:18.65px;background:#f6f6f6"></div>
<div class="a" style="left:90.8px;top:544.91px;width:1px;height:18.65px;background:#f6f6f6"></div>
<div class="a" style="left:151.7px;top:544.91px;width:1px;height:18.65px;background:#f6f6f6"></div>
<div class="a" style="left:261.5px;top:544.91px;width:1px;height:18.65px;background:#f6f6f6"></div>
<div class="a" style="left:325.3px;top:544.91px;width:1px;height:18.65px;background:#f6f6f6"></div>
<div class="a" style="left:368.5px;top:544.91px;width:1px;height:18.65px;background:#f6f6f6"></div>
<div class="a" style="left:432.3px;top:544.91px;width:1px;height:18.65px;background:#f6f6f6"></div>
<div class="a" style="left:496.0px;top:544.91px;width:1px;height:18.65px;background:#f6f6f6"></div>
<div class="a" style="left:555.0px;top:544.91px;width:1px;height:18.65px;background:#f6f6f6"></div>
<div class="a" style="left:613.5px;top:544.91px;width:1px;height:18.65px;background:#f6f6f6"></div>
<div class="a" style="left:732.3px;top:544.91px;width:1px;height:18.65px;background:#f6f6f6"></div>
<div class="a" style="left:794.1px;top:544.91px;width:1px;height:18.65px;background:#f6f6f6"></div>
<div class="a" style="left:857.3px;top:544.91px;width:1px;height:18.65px;background:#f6f6f6"></div>
<div class="a" style="left:910.1px;top:544.91px;width:1px;height:18.65px;background:#f6f6f6"></div>
<div class="a" style="left:962.8px;top:544.91px;width:1px;height:18.65px;background:#f6f6f6"></div>
<div class="a" style="left:1017.0px;top:544.91px;width:1px;height:18.65px;background:#f6f6f6"></div>
<div class="a cb" style="left:8.2px;top:549.91px"></div>
<div class="a td" style="left:20.7px;top:548.21px;width:25.6px">81</div>
<div class="a td" style="left:262.0px;top:548.21px;width:63.8px">Praew</div>
<div class="a td" style="left:325.8px;top:548.21px;width:43.2px">NORMAL</div>
<div class="a td" style="left:369.0px;top:548.21px;width:63.8px">214</div>
<div class="a td" style="left:432.8px;top:548.21px;width:63.7px">32</div>
<div class="a td" style="left:496.5px;top:548.21px;width:59.0px">15</div>
<div class="a td" style="left:555.5px;top:548.21px;width:58.5px">0</div>
<div class="a td" style="left:614.0px;top:548.21px;width:118.8px">2020-01-09 21:37:51</div>
<div class="a td" style="left:732.8px;top:548.21px;width:61.8px">5000</div>
<div class="a td" style="left:794.6px;top:548.21px;width:63.2px">2406</div>
<div class="a td" style="left:857.8px;top:548.21px;width:52.8px">2316</div>
<div class="a td" style="left:910.6px;top:548.21px;width:52.7px">1</div>
<div class="a td" style="left:963.3px;top:548.21px;width:54.2px">3</div>
<div class="a td" style="left:1017.5px;top:548.21px;width:61.3px">86</div>
<div class="a" style="left:55.9px;top:548.91px;width:8px;height:5.5px;background:#dcdcdc"></div>
<div class="a" style="left:55.9px;top:554.41px;width:8px;height:5px;background:#e6e6e6"></div>
<div class="a" style="left:63.9px;top:548.91px;width:8px;height:5.5px;background:#d4d4d4"></div>
<div class="a" style="left:63.9px;top:554.41px;width:8px;height:5px;background:#e6e6e6"></div>
<div class="a" style="left:71.9px;top:548.91px;width:8px;height:5.5px;background:#c4c4c4"></div>
<div class="a" style="left:71.9px;top:554.41px;width:8px;height:5px;background:#e2e2e2"></div>
<div class="a" style="left:79.9px;top:548.91px;width:8px;height:5.5px;background:#dcdcdc"></div>
<div class="a" style="left:79.9px;top:554.41px;width:8px;height:5px;background:#e6e6e6"></div>
<div class="a" style="left:87.9px;top:548.91px;width:8px;height:5.5px;background:#e8e8e8"></div>
<div class="a" style="left:87.9px;top:554.41px;width:8px;height:5px;background:#e6e6e6"></div>
<div class="a" style="left:95.9px;top:548.91px;width:8px;height:5.5px;background:#e8e8e8"></div>
<div class="a" style="left:95.9px;top:554.41px;width:8px;height:5px;background:#e6e6e6"></div>
<div class="a" style="left:103.9px;top:548.91px;width:8px;height:5.5px;background:#d0d0d0"></div>
<div class="a" style="left:103.9px;top:554.41px;width:8px;height:5px;background:#e4e4e4"></div>
<div class="a" style="left:111.9px;top:548.91px;width:8px;height:5.5px;background:#dcdcdc"></div>
<div class="a" style="left:111.9px;top:554.41px;width:8px;height:5px;background:#e6e6e6"></div>
<div class="a" style="left:119.9px;top:548.91px;width:8px;height:5.5px;background:#d8d8d8"></div>
<div class="a" style="left:119.9px;top:554.41px;width:8px;height:5px;background:#e2e2e2"></div>
<div class="a" style="left:127.9px;top:548.91px;width:8px;height:5.5px;background:#c4c4c4"></div>
<div class="a" style="left:127.9px;top:554.41px;width:8px;height:5px;background:#e2e2e2"></div>
<div class="a" style="left:135.9px;top:548.91px;width:8px;height:5.5px;background:#c4c4c4"></div>
<div class="a" style="left:135.9px;top:554.41px;width:8px;height:5px;background:#e2e2e2"></div>
<div class="a" style="left:183.7px;top:548.91px;width:8px;height:5.5px;background:#d0d0d0"></div>
<div class="a" style="left:183.7px;top:554.41px;width:8px;height:5px;background:#d0d0d0"></div>
<div class="a" style="left:191.7px;top:548.91px;width:8px;height:5.5px;background:#dcdcdc"></div>
<div class="a" style="left:191.7px;top:554.41px;width:8px;height:5px;background:#e6e6e6"></div>
<div class="a" style="left:199.7px;top:548.91px;width:8px;height:5.5px;background:#dcdcdc"></div>
<div class="a" style="left:199.7px;top:554.41px;width:8px;height:5px;background:#e6e6e6"></div>
<div class="a" style="left:207.7px;top:548.91px;width:8px;height:5.5px;background:#d0d0d0"></div>
<div class="a" style="left:207.7px;top:554.41px;width:8px;height:5px;background:#e4e4e4"></div>
<div class="a" style="left:215.7px;top:548.91px;width:8px;height:5.5px;background:#d4d4d4"></div>
<div class="a" style="left:215.7px;top:554.41px;width:8px;height:5px;background:#e6e6e6"></div>
<div class="a" style="left:223.7px;top:548.91px;width:8px;height:5.5px;background:#d4d4d4"></div>
<div class="a" style="left:223.7px;top:554.41px;width:8px;height:5px;background:#d4d4d4"></div>
<div class="a" style="left:4px;top:563.96px;width:1074.8px;height:17.45px;background:#e8e8e8;"></div>
<div class="a" style="left:20.2px;top:563.56px;width:1px;height:18.65px;background:#f6f6f6"></div>
<div class="a" style="left:45.8px;top:563.56px;width:1px;height:18.65px;background:#f6f6f6"></div>
<div class="a" style="left:90.8px;top:563.56px;width:1px;height:18.65px;background:#f6f6f6"></div>
<div class="a" style="left:151.7px;top:563.56px;width:1px;height:18.65px;background:#f6f6f6"></div>
<div class="a" style="left:261.5px;top:563.56px;width:1px;height:18.65px;background:#f6f6f6"></div>
<div class="a" style="left:325.3px;top:563.56px;width:1px;height:18.65px;background:#f6f6f6"></div>
<div class="a" style="left:368.5px;top:563.56px;width:1px;height:18.65px;background:#f6f6f6"></div>
<div class="a" style="left:432.3px;top:563.56px;width:1px;height:18.65px;background:#f6f6f6"></div>
<div class="a" style="left:496.0px;top:563.56px;width:1px;height:18.65px;background:#f6f6f6"></div>
<div class="a" style="left:555.0px;top:563.56px;width:1px;height:18.65px;background:#f6f6f6"></div>
<div class="a" style="left:613.5px;top:563.56px;width:1px;height:18.65px;background:#f6f6f6"></div>
<div class="a" style="left:732.3px;top:563.56px;width:1px;height:18.65px;background:#f6f6f6"></div>
<div class="a" style="left:794.1px;top:563.56px;width:1px;height:18.65px;background:#f6f6f6"></div>
<div class="a" style="left:857.3px;top:563.56px;width:1px;height:18.65px;background:#f6f6f6"></div>
<div class="a" style="left:910.1px;top:563.56px;width:1px;height:18.65px;background:#f6f6f6"></div>
<div class="a" style="left:962.8px;top:563.56px;width:1px;height:18.65px;background:#f6f6f6"></div>
<div class="a" style="left:1017.0px;top:563.56px;width:1px;height:18.65px;background:#f6f6f6"></div>
<div class="a cb" style="left:8.2px;top:568.56px"></div>
<div class="a td" style="left:20.7px;top:566.86px;width:25.6px">611</div>
<div class="a td" style="left:262.0px;top:566.86px;width:63.8px">B2-sts</div>
<div class="a td" style="left:325.8px;top:566.86px;width:43.2px">NORMAL</div>
<div class="a td" style="left:369.0px;top:566.86px;width:63.8px">74</div>
<div class="a td" style="left:432.8px;top:566.86px;width:63.7px">32</div>
<div class="a td" style="left:496.5px;top:566.86px;width:59.0px">3</div>
<div class="a td" style="left:555.5px;top:566.86px;width:58.5px">0</div>
<div class="a td" style="left:614.0px;top:566.86px;width:118.8px">2020-01-09 10:04:27</div>
<div class="a td" style="left:732.8px;top:566.86px;width:61.8px">3000</div>
<div class="a td" style="left:794.6px;top:566.86px;width:63.2px">891</div>
<div class="a td" style="left:857.8px;top:566.86px;width:52.8px">888</div>
<div class="a td" style="left:910.6px;top:566.86px;width:52.7px">0</div>
<div class="a td" style="left:963.3px;top:566.86px;width:54.2px">2</div>
<div class="a td" style="left:1017.5px;top:566.86px;width:61.3px">1</div>
<div class="a" style="left:63.9px;top:569.06px;width:8px;height:8px;background:#bebebe"></div>
<div class="a" style="left:71.9px;top:569.06px;width:8px;height:8px;background:#b2b2b2"></div>
<div class="a" style="left:79.9px;top:569.06px;width:8px;height:8px;background:#b6b6b6"></div>
<div class="a" style="left:87.9px;top:569.06px;width:8px;height:8px;background:#d8d8d8"></div>
<div class="a" style="left:95.9px;top:569.06px;width:8px;height:8px;background:#e4e4e4"></div>
<div class="a" style="left:103.9px;top:569.06px;width:8px;height:8px;background:#acacac"></div>
<div class="a" style="left:111.9px;top:569.06px;width:8px;height:8px;background:#b6b6b6"></div>
<div class="a" style="left:119.9px;top:569.06px;width:8px;height:8px;background:#bababa"></div>
<div class="a" style="left:127.9px;top:569.06px;width:8px;height:8px;background:#acacac"></div>
<div class="a" style="left:135.9px;top:569.06px;width:8px;height:8px;background:#c8c8c8"></div>
<div class="a" style="left:183.7px;top:569.06px;width:8px;height:8px;background:#bebebe"></div>
<div class="a" style="left:191.7px;top:569.06px;width:8px;height:8px;background:#bababa"></div>
<div class="a" style="left:199.7px;top:569.06px;width:8px;height:8px;background:#b6b6b6"></div>
<div class="a" style="left:207.7px;top:569.06px;width:8px;height:8px;background:#bababa"></div>
<div class="a" style="left:4px;top:581.40px;width:1074.8px;height:19.85px;background:#faf9f9;box-shadow:inset 0 1px #fff,inset 0 -1px #fff"></div>
<div class="a" style="left:20.2px;top:582.20px;width:1px;height:18.65px;background:#f6f6f6"></div>
<div class="a" style="left:45.8px;top:582.20px;width:1px;height:18.65px;background:#f6f6f6"></div>
<div class="a" style="left:90.8px;top:582.20px;width:1px;height:18.65px;background:#f6f6f6"></div>
<div class="a" style="left:151.7px;top:582.20px;width:1px;height:18.65px;background:#f6f6f6"></div>
<div class="a" style="left:261.5px;top:582.20px;width:1px;height:18.65px;background:#f6f6f6"></div>
<div class="a" style="left:325.3px;top:582.20px;width:1px;height:18.65px;background:#f6f6f6"></div>
<div class="a" style="left:368.5px;top:582.20px;width:1px;height:18.65px;background:#f6f6f6"></div>
<div class="a" style="left:432.3px;top:582.20px;width:1px;height:18.65px;background:#f6f6f6"></div>
<div class="a" style="left:496.0px;top:582.20px;width:1px;height:18.65px;background:#f6f6f6"></div>
<div class="a" style="left:555.0px;top:582.20px;width:1px;height:18.65px;background:#f6f6f6"></div>
<div class="a" style="left:613.5px;top:582.20px;width:1px;height:18.65px;background:#f6f6f6"></div>
<div class="a" style="left:732.3px;top:582.20px;width:1px;height:18.65px;background:#f6f6f6"></div>
<div class="a" style="left:794.1px;top:582.20px;width:1px;height:18.65px;background:#f6f6f6"></div>
<div class="a" style="left:857.3px;top:582.20px;width:1px;height:18.65px;background:#f6f6f6"></div>
<div class="a" style="left:910.1px;top:582.20px;width:1px;height:18.65px;background:#f6f6f6"></div>
<div class="a" style="left:962.8px;top:582.20px;width:1px;height:18.65px;background:#f6f6f6"></div>
<div class="a" style="left:1017.0px;top:582.20px;width:1px;height:18.65px;background:#f6f6f6"></div>
<div class="a cb" style="left:8.2px;top:587.20px"></div>
<div class="a td" style="left:20.7px;top:585.50px;width:25.6px">117</div>
<div class="a td" style="left:262.0px;top:585.50px;width:63.8px">Praew</div>
<div class="a td" style="left:325.8px;top:585.50px;width:43.2px">NORMAL</div>
<div class="a td" style="left:369.0px;top:585.50px;width:63.8px">65</div>
<div class="a td" style="left:432.8px;top:585.50px;width:63.7px">31</div>
<div class="a td" style="left:496.5px;top:585.50px;width:59.0px">15</div>
<div class="a td" style="left:555.5px;top:585.50px;width:58.5px">5</div>
<div class="a td" style="left:614.0px;top:585.50px;width:118.8px">2020-01-10 14:34:04</div>
<div class="a td" style="left:732.8px;top:585.50px;width:61.8px">3000</div>
<div class="a td" style="left:794.6px;top:585.50px;width:63.2px">2924</div>
<div class="a td" style="left:857.8px;top:585.50px;width:52.8px">2754</div>
<div class="a td" style="left:910.6px;top:585.50px;width:52.7px">6</div>
<div class="a td" style="left:963.3px;top:585.50px;width:54.2px">134</div>
<div class="a td" style="left:1017.5px;top:585.50px;width:61.3px">30</div>
<div class="a" style="left:55.9px;top:586.20px;width:8px;height:5.5px;background:#cacaca"></div>
<div class="a" style="left:55.9px;top:591.70px;width:8px;height:5px;background:#cacaca"></div>
<div class="a" style="left:63.9px;top:586.20px;width:8px;height:5.5px;background:#d8d8d8"></div>
<div class="a" style="left:63.9px;top:591.70px;width:8px;height:5px;background:#d8d8d8"></div>
<div class="a" style="left:71.9px;top:586.20px;width:8px;height:5.5px;background:#cacaca"></div>
<div class="a" style="left:71.9px;top:591.70px;width:8px;height:5px;background:#dedede"></div>
<div class="a" style="left:79.9px;top:586.20px;width:8px;height:5.5px;background:#d0d0d0"></div>
<div class="a" style="left:79.9px;top:591.70px;width:8px;height:5px;background:#dadada"></div>
<div class="a" style="left:87.9px;top:586.20px;width:8px;height:5.5px;background:#f0f0f0"></div>
<div class="a" style="left:87.9px;top:591.70px;width:8px;height:5px;background:#e6e6e6"></div>
<div class="a" style="left:95.9px;top:586.20px;width:8px;height:5.5px;background:#f0f0f0"></div>
<div class="a" style="left:95.9px;top:591.70px;width:8px;height:5px;background:#e6e6e6"></div>
<div class="a" style="left:103.9px;top:586.20px;width:8px;height:5.5px;background:#d4d4d4"></div>
<div class="a" style="left:103.9px;top:591.70px;width:8px;height:5px;background:#e6e6e6"></div>
<div class="a" style="left:111.9px;top:586.20px;width:8px;height:5.5px;background:#d4d4d4"></div>
<div class="a" style="left:111.9px;top:591.70px;width:8px;height:5px;background:#d4d4d4"></div>
<div class="a" style="left:119.9px;top:586.20px;width:8px;height:5.5px;background:#cacaca"></div>
<div class="a" style="left:119.9px;top:591.70px;width:8px;height:5px;background:#cacaca"></div>
<div class="a" style="left:127.9px;top:586.20px;width:8px;height:5.5px;background:#d4d4d4"></div>
<div class="a" style="left:127.9px;top:591.70px;width:8px;height:5px;background:#e6e6e6"></div>
<div class="a" style="left:135.9px;top:586.20px;width:8px;height:5.5px;background:#d4d4d4"></div>
<div class="a" style="left:135.9px;top:591.70px;width:8px;height:5px;background:#e6e6e6"></div>
<div class="a" style="left:183.7px;top:586.20px;width:8px;height:5.5px;background:#dcdcdc"></div>
<div class="a" style="left:183.7px;top:591.70px;width:8px;height:5px;background:#e6e6e6"></div>
<div class="a" style="left:191.7px;top:586.20px;width:8px;height:5.5px;background:#d4d4d4"></div>
<div class="a" style="left:191.7px;top:591.70px;width:8px;height:5px;background:#e6e6e6"></div>
<div class="a" style="left:199.7px;top:586.20px;width:8px;height:5.5px;background:#d4d4d4"></div>
<div class="a" style="left:199.7px;top:591.70px;width:8px;height:5px;background:#e6e6e6"></div>
<div class="a" style="left:207.7px;top:586.20px;width:8px;height:5.5px;background:#c4c4c4"></div>
<div class="a" style="left:207.7px;top:591.70px;width:8px;height:5px;background:#d8d8d8"></div>
<div class="a" style="left:215.7px;top:586.20px;width:8px;height:5.5px;background:#c4c4c4"></div>
<div class="a" style="left:215.7px;top:591.70px;width:8px;height:5px;background:#d8d8d8"></div>
<div class="a" style="left:223.7px;top:586.20px;width:8px;height:5.5px;background:#e2e2e2"></div>
<div class="a" style="left:223.7px;top:591.70px;width:8px;height:5px;background:#e6e6e6"></div>
<div class="a" style="left:4px;top:601.25px;width:1074.8px;height:17.45px;background:#e8e8e8;"></div>
<div class="a" style="left:20.2px;top:600.85px;width:1px;height:18.65px;background:#f6f6f6"></div>
<div class="a" style="left:45.8px;top:600.85px;width:1px;height:18.65px;background:#f6f6f6"></div>
<div class="a" style="left:90.8px;top:600.85px;width:1px;height:18.65px;background:#f6f6f6"></div>
<div class="a" style="left:151.7px;top:600.85px;width:1px;height:18.65px;background:#f6f6f6"></div>
<div class="a" style="left:261.5px;top:600.85px;width:1px;height:18.65px;background:#f6f6f6"></div>
<div class="a" style="left:325.3px;top:600.85px;width:1px;height:18.65px;background:#f6f6f6"></div>
<div class="a" style="left:368.5px;top:600.85px;width:1px;height:18.65px;background:#f6f6f6"></div>
<div class="a" style="left:432.3px;top:600.85px;width:1px;height:18.65px;background:#f6f6f6"></div>
<div class="a" style="left:496.0px;top:600.85px;width:1px;height:18.65px;background:#f6f6f6"></div>
<div class="a" style="left:555.0px;top:600.85px;width:1px;height:18.65px;background:#f6f6f6"></div>
<div class="a" style="left:613.5px;top:600.85px;width:1px;height:18.65px;background:#f6f6f6"></div>
<div class="a" style="left:732.3px;top:600.85px;width:1px;height:18.65px;background:#f6f6f6"></div>
<div class="a" style="left:794.1px;top:600.85px;width:1px;height:18.65px;background:#f6f6f6"></div>
<div class="a" style="left:857.3px;top:600.85px;width:1px;height:18.65px;background:#f6f6f6"></div>
<div class="a" style="left:910.1px;top:600.85px;width:1px;height:18.65px;background:#f6f6f6"></div>
<div class="a" style="left:962.8px;top:600.85px;width:1px;height:18.65px;background:#f6f6f6"></div>
<div class="a" style="left:1017.0px;top:600.85px;width:1px;height:18.65px;background:#f6f6f6"></div>
<div class="a cb" style="left:8.2px;top:605.85px"></div>
<div class="a td" style="left:20.7px;top:604.15px;width:25.6px">198</div>
<div class="a td" style="left:262.0px;top:604.15px;width:63.8px">Praew</div>
<div class="a td" style="left:325.8px;top:604.15px;width:43.2px">NORMAL</div>
<div class="a td" style="left:369.0px;top:604.15px;width:63.8px">156</div>
<div class="a td" style="left:432.8px;top:604.15px;width:63.7px">30</div>
<div class="a td" style="left:496.5px;top:604.15px;width:59.0px">15</div>
<div class="a td" style="left:555.5px;top:604.15px;width:58.5px">0</div>
<div class="a td" style="left:614.0px;top:604.15px;width:118.8px">2020-01-10 10:03:46</div>
<div class="a td" style="left:732.8px;top:604.15px;width:61.8px">5000</div>
<div class="a td" style="left:794.6px;top:604.15px;width:63.2px">2674</div>
<div class="a td" style="left:857.8px;top:604.15px;width:52.8px">2667</div>
<div class="a td" style="left:910.6px;top:604.15px;width:52.7px">6</div>
<div class="a td" style="left:963.3px;top:604.15px;width:54.2px">0</div>
<div class="a td" style="left:1017.5px;top:604.15px;width:61.3px">1</div>
<div class="a" style="left:47.9px;top:606.35px;width:8px;height:8px;background:#acacac"></div>
<div class="a" style="left:55.9px;top:606.35px;width:8px;height:8px;background:#b2b2b2"></div>
<div class="a" style="left:63.9px;top:606.35px;width:8px;height:8px;background:#c2c2c2"></div>
<div class="a" style="left:71.9px;top:606.35px;width:8px;height:8px;background:#acacac"></div>
<div class="a" style="left:79.9px;top:606.35px;width:8px;height:8px;background:#c2c2c2"></div>
<div class="a" style="left:87.9px;top:606.35px;width:8px;height:8px;background:#e0e0e0"></div>
<div class="a" style="left:95.9px;top:606.35px;width:8px;height:8px;background:#e0e0e0"></div>
<div class="a" style="left:103.9px;top:606.35px;width:8px;height:8px;background:#b6b6b6"></div>
<div class="a" style="left:111.9px;top:606.35px;width:8px;height:8px;background:#acacac"></div>
<div class="a" style="left:119.9px;top:606.35px;width:8px;height:8px;background:#bababa"></div>
<div class="a" style="left:127.9px;top:606.35px;width:8px;height:8px;background:#bababa"></div>
<div class="a" style="left:135.9px;top:606.35px;width:8px;height:8px;background:#c8c8c8"></div>
<div class="a" style="left:183.7px;top:606.35px;width:8px;height:8px;background:#bebebe"></div>
<div class="a" style="left:191.7px;top:606.35px;width:8px;height:8px;background:#acacac"></div>
<div class="a" style="left:199.7px;top:606.35px;width:8px;height:8px;background:#b6b6b6"></div>
<div class="a" style="left:207.7px;top:606.35px;width:8px;height:8px;background:#bababa"></div>
<div class="a" style="left:215.7px;top:606.35px;width:8px;height:8px;background:#c8c8c8"></div>
<div class="a" style="left:223.7px;top:606.35px;width:8px;height:8px;background:#b6b6b6"></div>
<div class="a" style="left:4px;top:618.70px;width:1074.8px;height:19.85px;background:#faf9f9;box-shadow:inset 0 1px #fff,inset 0 -1px #fff"></div>
<div class="a" style="left:20.2px;top:619.50px;width:1px;height:18.65px;background:#f6f6f6"></div>
<div class="a" style="left:45.8px;top:619.50px;width:1px;height:18.65px;background:#f6f6f6"></div>
<div class="a" style="left:90.8px;top:619.50px;width:1px;height:18.65px;background:#f6f6f6"></div>
<div class="a" style="left:151.7px;top:619.50px;width:1px;height:18.65px;background:#f6f6f6"></div>
<div class="a" style="left:261.5px;top:619.50px;width:1px;height:18.65px;background:#f6f6f6"></div>
<div class="a" style="left:325.3px;top:619.50px;width:1px;height:18.65px;background:#f6f6f6"></div>
<div class="a" style="left:368.5px;top:619.50px;width:1px;height:18.65px;background:#f6f6f6"></div>
<div class="a" style="left:432.3px;top:619.50px;width:1px;height:18.65px;background:#f6f6f6"></div>
<div class="a" style="left:496.0px;top:619.50px;width:1px;height:18.65px;background:#f6f6f6"></div>
<div class="a" style="left:555.0px;top:619.50px;width:1px;height:18.65px;background:#f6f6f6"></div>
<div class="a" style="left:613.5px;top:619.50px;width:1px;height:18.65px;background:#f6f6f6"></div>
<div class="a" style="left:732.3px;top:619.50px;width:1px;height:18.65px;background:#f6f6f6"></div>
<div class="a" style="left:794.1px;top:619.50px;width:1px;height:18.65px;background:#f6f6f6"></div>
<div class="a" style="left:857.3px;top:619.50px;width:1px;height:18.65px;background:#f6f6f6"></div>
<div class="a" style="left:910.1px;top:619.50px;width:1px;height:18.65px;background:#f6f6f6"></div>
<div class="a" style="left:962.8px;top:619.50px;width:1px;height:18.65px;background:#f6f6f6"></div>
<div class="a" style="left:1017.0px;top:619.50px;width:1px;height:18.65px;background:#f6f6f6"></div>
<div class="a cb" style="left:8.2px;top:624.50px"></div>
<div class="a td" style="left:20.7px;top:622.80px;width:25.6px">626</div>
<div class="a td" style="left:262.0px;top:622.80px;width:63.8px">B2-zw</div>
<div class="a td" style="left:325.8px;top:622.80px;width:43.2px">NORMAL</div>
<div class="a td" style="left:369.0px;top:622.80px;width:63.8px">67</div>
<div class="a td" style="left:432.8px;top:622.80px;width:63.7px">30</div>
<div class="a td" style="left:496.5px;top:622.80px;width:59.0px">17</div>
<div class="a td" style="left:555.5px;top:622.80px;width:58.5px">1</div>
<div class="a td" style="left:614.0px;top:622.80px;width:118.8px">2020-01-11 08:59:46</div>
<div class="a td" style="left:732.8px;top:622.80px;width:61.8px">500</div>
<div class="a td" style="left:794.6px;top:622.80px;width:63.2px">376</div>
<div class="a td" style="left:857.8px;top:622.80px;width:52.8px">363</div>
<div class="a td" style="left:910.6px;top:622.80px;width:52.7px">0</div>
<div class="a td" style="left:963.3px;top:622.80px;width:54.2px">1</div>
<div class="a td" style="left:1017.5px;top:622.80px;width:61.3px">0</div>
<div class="a" style="left:47.9px;top:625.00px;width:8px;height:8px;background:#d0d0d0"></div>
<div class="a" style="left:55.9px;top:625.00px;width:8px;height:8px;background:#c4c4c4"></div>
<div class="a" style="left:63.9px;top:625.00px;width:8px;height:8px;background:#c4c4c4"></div>
<div class="a" style="left:71.9px;top:625.00px;width:8px;height:8px;background:#e2e2e2"></div>
<div class="a" style="left:79.9px;top:625.00px;width:8px;height:8px;background:#dcdcdc"></div>
<div class="a" style="left:87.9px;top:625.00px;width:8px;height:8px;background:#f0f0f0"></div>
<div class="a" style="left:95.9px;top:625.00px;width:8px;height:8px;background:#ececec"></div>
<div class="a" style="left:103.9px;top:625.00px;width:8px;height:8px;background:#cacaca"></div>
<div class="a" style="left:111.9px;top:625.00px;width:8px;height:8px;background:#d0d0d0"></div>
<div class="a" style="left:119.9px;top:625.00px;width:8px;height:8px;background:#d4d4d4"></div>
<div class="a" style="left:127.9px;top:625.00px;width:8px;height:8px;background:#d8d8d8"></div>
<div class="a" style="left:135.9px;top:625.00px;width:8px;height:8px;background:#d0d0d0"></div>
<div class="a" style="left:183.7px;top:625.00px;width:8px;height:8px;background:#cacaca"></div>
<div class="a" style="left:191.7px;top:625.00px;width:8px;height:8px;background:#e2e2e2"></div>
<div class="a" style="left:199.7px;top:625.00px;width:8px;height:8px;background:#d0d0d0"></div>
<div class="a" style="left:207.7px;top:625.00px;width:8px;height:8px;background:#e2e2e2"></div>
<div class="a" style="left:215.7px;top:625.00px;width:8px;height:8px;background:#d4d4d4"></div>
<div class="a" style="left:223.7px;top:625.00px;width:8px;height:8px;background:#c4c4c4"></div>
<div class="a" style="left:4px;top:638.55px;width:1074.8px;height:17.45px;background:#e8e8e8;"></div>
<div class="a" style="left:20.2px;top:638.15px;width:1px;height:18.65px;background:#f6f6f6"></div>
<div class="a" style="left:45.8px;top:638.15px;width:1px;height:18.65px;background:#f6f6f6"></div>
<div class="a" style="left:90.8px;top:638.15px;width:1px;height:18.65px;background:#f6f6f6"></div>
<div class="a" style="left:151.7px;top:638.15px;width:1px;height:18.65px;background:#f6f6f6"></div>
<div class="a" style="left:261.5px;top:638.15px;width:1px;height:18.65px;background:#f6f6f6"></div>
<div class="a" style="left:325.3px;top:638.15px;width:1px;height:18.65px;background:#f6f6f6"></div>
<div class="a" style="left:368.5px;top:638.15px;width:1px;height:18.65px;background:#f6f6f6"></div>
<div class="a" style="left:432.3px;top:638.15px;width:1px;height:18.65px;background:#f6f6f6"></div>
<div class="a" style="left:496.0px;top:638.15px;width:1px;height:18.65px;background:#f6f6f6"></div>
<div class="a" style="left:555.0px;top:638.15px;width:1px;height:18.65px;background:#f6f6f6"></div>
<div class="a" style="left:613.5px;top:638.15px;width:1px;height:18.65px;background:#f6f6f6"></div>
<div class="a" style="left:732.3px;top:638.15px;width:1px;height:18.65px;background:#f6f6f6"></div>
<div class="a" style="left:794.1px;top:638.15px;width:1px;height:18.65px;background:#f6f6f6"></div>
<div class="a" style="left:857.3px;top:638.15px;width:1px;height:18.65px;background:#f6f6f6"></div>
<div class="a" style="left:910.1px;top:638.15px;width:1px;height:18.65px;background:#f6f6f6"></div>
<div class="a" style="left:962.8px;top:638.15px;width:1px;height:18.65px;background:#f6f6f6"></div>
<div class="a" style="left:1017.0px;top:638.15px;width:1px;height:18.65px;background:#f6f6f6"></div>
<div class="a cb" style="left:8.2px;top:643.15px"></div>
<div class="a td" style="left:20.7px;top:641.45px;width:25.6px">185</div>
<div class="a td" style="left:262.0px;top:641.45px;width:63.8px">Praew</div>
<div class="a td" style="left:325.8px;top:641.45px;width:43.2px">NORMAL</div>
<div class="a td" style="left:369.0px;top:641.45px;width:63.8px">158</div>
<div class="a td" style="left:432.8px;top:641.45px;width:63.7px">30</div>
<div class="a td" style="left:496.5px;top:641.45px;width:59.0px">12</div>
<div class="a td" style="left:555.5px;top:641.45px;width:58.5px">1</div>
<div class="a td" style="left:614.0px;top:641.45px;width:118.8px">2020-01-10 12:52:55</div>
<div class="a td" style="left:732.8px;top:641.45px;width:61.8px">3000</div>
<div class="a td" style="left:794.6px;top:641.45px;width:63.2px">2134</div>
<div class="a td" style="left:857.8px;top:641.45px;width:52.8px">2128</div>
<div class="a td" style="left:910.6px;top:641.45px;width:52.7px">2</div>
<div class="a td" style="left:963.3px;top:641.45px;width:54.2px">3</div>
<div class="a td" style="left:1017.5px;top:641.45px;width:61.3px">1</div>
<div class="a" style="left:47.9px;top:643.65px;width:8px;height:8px;background:#c2c2c2"></div>
<div class="a" style="left:55.9px;top:643.65px;width:8px;height:8px;background:#bababa"></div>
<div class="a" style="left:63.9px;top:643.65px;width:8px;height:8px;background:#bebebe"></div>
<div class="a" style="left:71.9px;top:643.65px;width:8px;height:8px;background:#bebebe"></div>
<div class="a" style="left:79.9px;top:643.65px;width:8px;height:8px;background:#b2b2b2"></div>
<div class="a" style="left:87.9px;top:643.65px;width:8px;height:8px;background:#d8d8d8"></div>
<div class="a" style="left:95.9px;top:643.65px;width:8px;height:8px;background:#d8d8d8"></div>
<div class="a" style="left:103.9px;top:643.65px;width:8px;height:8px;background:#c2c2c2"></div>
<div class="a" style="left:111.9px;top:643.65px;width:8px;height:8px;background:#bababa"></div>
<div class="a" style="left:119.9px;top:643.65px;width:8px;height:8px;background:#bababa"></div>
<div class="a" style="left:127.9px;top:643.65px;width:8px;height:8px;background:#bebebe"></div>
<div class="a" style="left:135.9px;top:643.65px;width:8px;height:8px;background:#c8c8c8"></div>
<div class="a" style="left:183.7px;top:643.65px;width:8px;height:8px;background:#b2b2b2"></div>
<div class="a" style="left:191.7px;top:643.65px;width:8px;height:8px;background:#c2c2c2"></div>
<div class="a" style="left:199.7px;top:643.65px;width:8px;height:8px;background:#c8c8c8"></div>
<div class="a" style="left:207.7px;top:643.65px;width:8px;height:8px;background:#b6b6b6"></div>
<div class="a" style="left:215.7px;top:643.65px;width:8px;height:8px;background:#bababa"></div>
<div class="a" style="left:223.7px;top:643.65px;width:8px;height:8px;background:#acacac"></div>
<div class="a" style="left:4px;top:656.00px;width:1074.8px;height:19.85px;background:#faf9f9;box-shadow:inset 0 1px #fff,inset 0 -1px #fff"></div>
<div class="a" style="left:20.2px;top:656.80px;width:1px;height:18.65px;background:#f6f6f6"></div>
<div class="a" style="left:45.8px;top:656.80px;width:1px;height:18.65px;background:#f6f6f6"></div>
<div class="a" style="left:90.8px;top:656.80px;width:1px;height:18.65px;background:#f6f6f6"></div>
<div class="a" style="left:151.7px;top:656.80px;width:1px;height:18.65px;background:#f6f6f6"></div>
<div class="a" style="left:261.5px;top:656.80px;width:1px;height:18.65px;background:#f6f6f6"></div>
<div class="a" style="left:325.3px;top:656.80px;width:1px;height:18.65px;background:#f6f6f6"></div>
<div class="a" style="left:368.5px;top:656.80px;width:1px;height:18.65px;background:#f6f6f6"></div>
<div class="a" style="left:432.3px;top:656.80px;width:1px;height:18.65px;background:#f6f6f6"></div>
<div class="a" style="left:496.0px;top:656.80px;width:1px;height:18.65px;background:#f6f6f6"></div>
<div class="a" style="left:555.0px;top:656.80px;width:1px;height:18.65px;background:#f6f6f6"></div>
<div class="a" style="left:613.5px;top:656.80px;width:1px;height:18.65px;background:#f6f6f6"></div>
<div class="a" style="left:732.3px;top:656.80px;width:1px;height:18.65px;background:#f6f6f6"></div>
<div class="a" style="left:794.1px;top:656.80px;width:1px;height:18.65px;background:#f6f6f6"></div>
<div class="a" style="left:857.3px;top:656.80px;width:1px;height:18.65px;background:#f6f6f6"></div>
<div class="a" style="left:910.1px;top:656.80px;width:1px;height:18.65px;background:#f6f6f6"></div>
<div class="a" style="left:962.8px;top:656.80px;width:1px;height:18.65px;background:#f6f6f6"></div>
<div class="a" style="left:1017.0px;top:656.80px;width:1px;height:18.65px;background:#f6f6f6"></div>
<div class="a cb" style="left:8.2px;top:661.80px"></div>
<div class="a td" style="left:20.7px;top:660.10px;width:25.6px">654</div>
<div class="a td" style="left:262.0px;top:660.10px;width:63.8px">B2-zw</div>
<div class="a td" style="left:325.8px;top:660.10px;width:43.2px">NORMAL</div>
<div class="a td" style="left:369.0px;top:660.10px;width:63.8px">77</div>
<div class="a td" style="left:432.8px;top:660.10px;width:63.7px">30</div>
<div class="a td" style="left:496.5px;top:660.10px;width:59.0px">18</div>
<div class="a td" style="left:555.5px;top:660.10px;width:58.5px">1</div>
<div class="a td" style="left:614.0px;top:660.10px;width:118.8px">2020-01-10 15:31:46</div>
<div class="a td" style="left:732.8px;top:660.10px;width:61.8px">500</div>
<div class="a td" style="left:794.6px;top:660.10px;width:63.2px">461</div>
<div class="a td" style="left:857.8px;top:660.10px;width:52.8px">461</div>
<div class="a td" style="left:910.6px;top:660.10px;width:52.7px">0</div>
<div class="a td" style="left:963.3px;top:660.10px;width:54.2px">0</div>
<div class="a td" style="left:1017.5px;top:660.10px;width:61.3px">0</div>
<div class="a" style="left:47.9px;top:662.30px;width:8px;height:8px;background:#d8d8d8"></div>
<div class="a" style="left:55.9px;top:662.30px;width:8px;height:8px;background:#cacaca"></div>
<div class="a" style="left:63.9px;top:662.30px;width:8px;height:8px;background:#cacaca"></div>
<div class="a" style="left:71.9px;top:662.30px;width:8px;height:8px;background:#d4d4d4"></div>
<div class="a" style="left:79.9px;top:662.30px;width:8px;height:8px;background:#d4d4d4"></div>
<div class="a" style="left:87.9px;top:662.30px;width:8px;height:8px;background:#f0f0f0"></div>
<div class="a" style="left:95.9px;top:662.30px;width:8px;height:8px;background:#f0f0f0"></div>
<div class="a" style="left:103.9px;top:662.30px;width:8px;height:8px;background:#d0d0d0"></div>
<div class="a" style="left:111.9px;top:662.30px;width:8px;height:8px;background:#d0d0d0"></div>
<div class="a" style="left:119.9px;top:662.30px;width:8px;height:8px;background:#dcdcdc"></div>
<div class="a" style="left:127.9px;top:662.30px;width:8px;height:8px;background:#dcdcdc"></div>
<div class="a" style="left:135.9px;top:662.30px;width:8px;height:8px;background:#dcdcdc"></div>
<div class="a" style="left:183.7px;top:662.30px;width:8px;height:8px;background:#d0d0d0"></div>
<div class="a" style="left:191.7px;top:662.30px;width:8px;height:8px;background:#d4d4d4"></div>
<div class="a" style="left:199.7px;top:662.30px;width:8px;height:8px;background:#dcdcdc"></div>
<div class="a" style="left:207.7px;top:662.30px;width:8px;height:8px;background:#cacaca"></div>
<div class="a" style="left:215.7px;top:662.30px;width:8px;height:8px;background:#d0d0d0"></div>
<div class="a" style="left:223.7px;top:662.30px;width:8px;height:8px;background:#d4d4d4"></div>
<div class="a td" style="left:225px;top:175.25px;text-align:left">ı</div>
<div class="a td" style="left:223.5px;top:287.14px;text-align:left">d</div>
<div class="a td" style="left:48.2px;top:343.08px;text-align:left">15</div>
<div class="a td" style="left:224.5px;top:343.08px;text-align:left">a</div>
<div class="a td" style="left:221.5px;top:361.73px;text-align:left">b</div>
<div class="a td" style="left:48.2px;top:436.32px;text-align:left">15'</div>
<div class="a td" style="left:215px;top:454.97px;text-align:left">tac</div>
<div class="a td" style="left:216.5px;top:473.62px;text-align:left">daa</div>
<div class="a td" style="left:223.5px;top:492.26px;text-align:left">ob</div>
<div class="a td" style="left:224px;top:510.91px;text-align:left">.</div>
<div class="a td" style="left:48.2px;top:529.56px;text-align:left">1</div>
<div class="a td" style="left:48.2px;top:548.21px;text-align:left">1</div>
<div class="a td" style="left:48.2px;top:566.86px;text-align:left">184</div>
<div class="a td" style="left:218px;top:566.86px;text-align:left">az</div>
<div class="a td" style="left:48.2px;top:585.50px;text-align:left">1</div>
<div class="a" style="left:4px;top:675.8px;width:1075px;height:4px;background:#ececec"></div>
<div class="a" style="left:4px;top:679.7px;width:1076px;height:6px;background:#e8e8e8"></div>
<div class="a" style="left:5px;top:679.7px;width:970px;height:6px;background:#c9c9c9;border-radius:1px"></div>
<div class="a" style="left:362px;top:128.7px;width:719px;height:32px;border:4.6px solid #1aa81a;border-radius:4px"></div>
<svg class="a" style="left:800px;top:605px" width="62" height="56" viewBox="0 0 62 56">
<defs><filter id="sh" x="-20%" y="-20%" width="140%" height="140%"><feGaussianBlur in="SourceAlpha" stdDeviation="0.8"/><feOffset dx="0.3" dy="0.5"/><feComponentTransfer><feFuncA type="linear" slope="0.45"/></feComponentTransfer><feMerge><feMergeNode/><feMergeNode in="SourceGraphic"/></feMerge></filter></defs>
<g filter="url(#sh)" stroke="#a8a8a8" stroke-width="0.7" fill="#fff">
<path fill-opacity="0.85" d="M25.3 11.1 C33.8 11.1 40.6 17.2 40.6 24.7 C40.6 32.2 33.8 38.3 25.3 38.3 C23.3 38.3 21.4 38 19.6 37.4 L14 40 L15.6 35.3 C12 32.8 10 29 10 24.7 C10 17.2 16.8 11.1 25.3 11.1 Z"/>
<path d="M39.4 22.2 C32 22.2 26 27.7 26 34.5 C26 41.3 32 46.8 39.4 46.8 C41.1 46.8 42.7 46.5 44.2 46 L49.5 48.6 L48 44.2 C51 42 52.8 38.5 52.8 34.5 C52.8 27.7 46.8 22.2 39.4 22.2 Z"/>
</g>
<g fill="none" stroke="#9a9a9a" stroke-width="0.8"><circle cx="19.4" cy="20" r="1.3"/><circle cx="32.2" cy="20" r="1.3"/><circle cx="35" cy="30" r="1.1"/><circle cx="44.4" cy="30" r="1.1"/></g>
</svg>
<div class="a" style="left:860.5px;top:619px;font-size:26.5px;line-height:34px;color:#fff;text-shadow:0 0 0.8px #8a8a8a,0.5px 0.5px 0.8px #999;letter-spacing:0px">电商软件小博士</div>
</body></html>
